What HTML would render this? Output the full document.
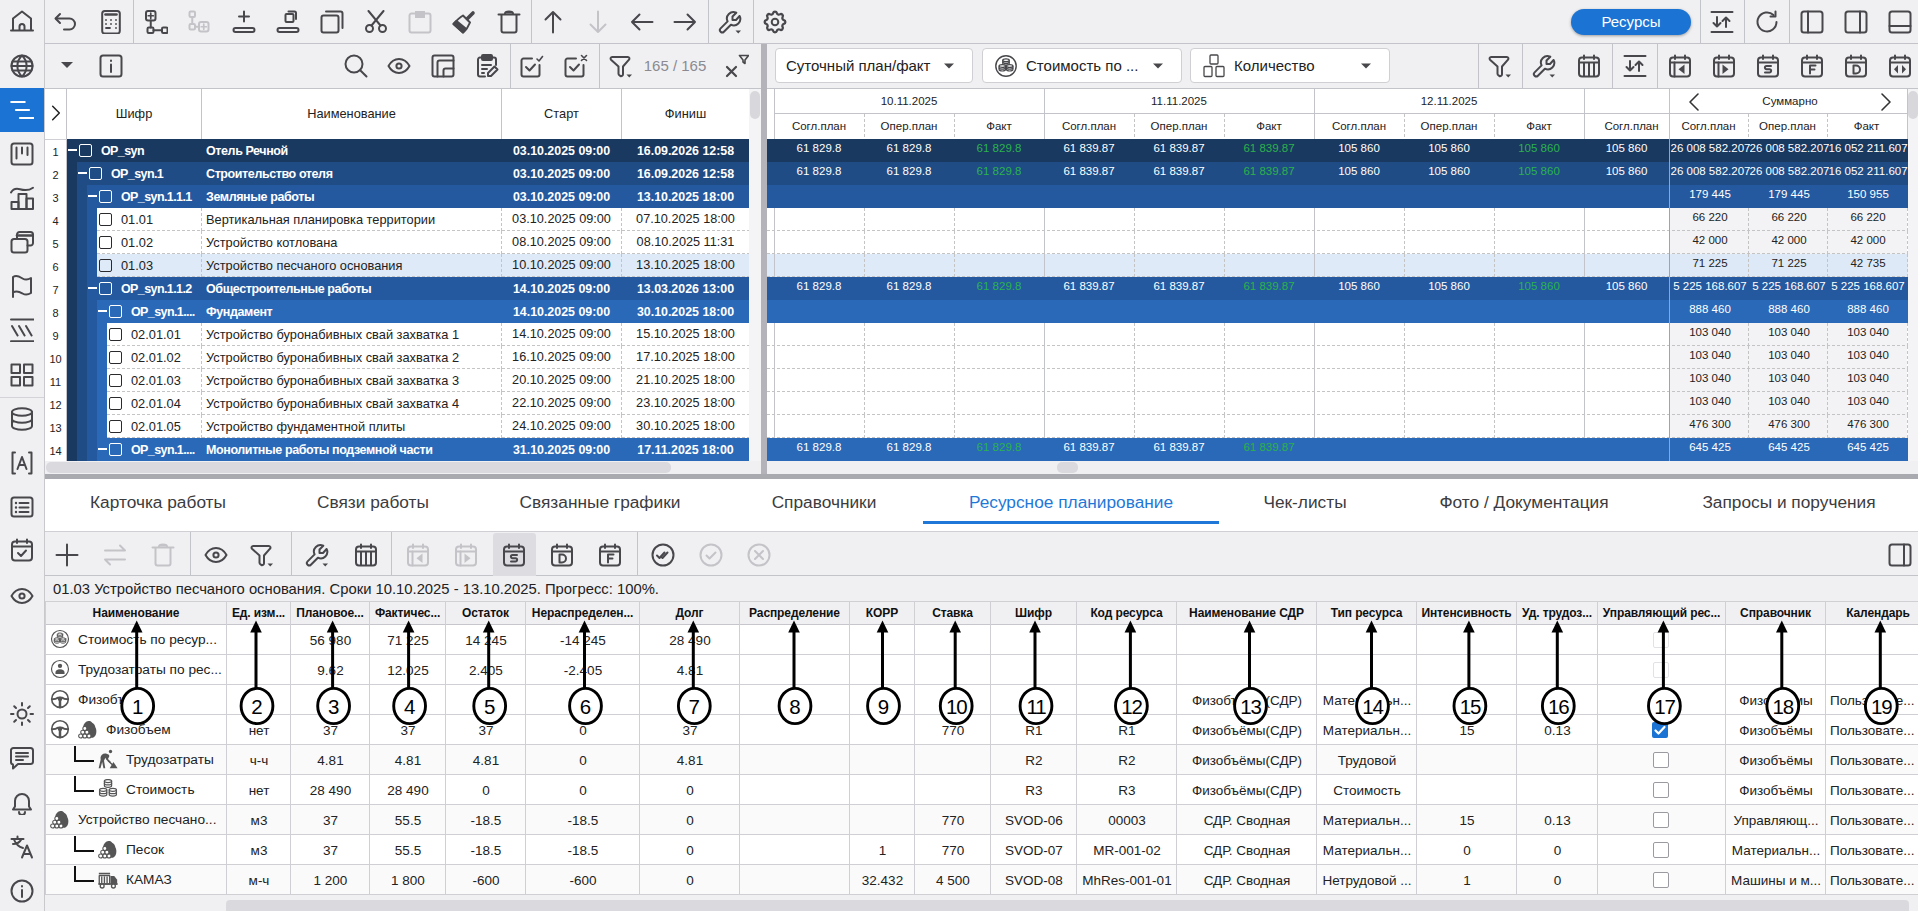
<!DOCTYPE html><html><head><meta charset="utf-8"><style>html,body{margin:0;padding:0;width:1918px;height:911px;overflow:hidden;background:#fff;font-family:"Liberation Sans",sans-serif}</style></head><body><div style="position:relative;width:1918px;height:911px;overflow:hidden"><div style="position:absolute;left:0px;top:0px;width:44px;height:911px;background:#f0f0f3"></div>
<div style="position:absolute;left:44px;top:0px;width:1px;height:911px;background:#c8c8cd"></div>
<div style="position:absolute;left:0px;top:88px;width:44px;height:44px;background:#1b74d3"></div>
<div style="position:absolute;left:0px;top:397px;width:44px;height:1px;background:#d4d4d8"></div>
<div style="color:#48484c"><svg style="position:absolute;left:10.0px;top:10.0px;" width="24" height="24" viewBox="0 0 24 24" fill="none" stroke="currentColor" stroke-width="2" stroke-linecap="round" stroke-linejoin="round"><path d="M1 20.5h22"/><path d="M3 20V8.5L12 1.5l9 7V20"/><path d="M9.5 20v-3.5a2.5 2.5 0 0 1 5 0V20"/></svg></div>
<div style="color:#48484c"><svg style="position:absolute;left:10.0px;top:54.0px;" width="24" height="24" viewBox="0 0 24 24" fill="none" stroke="currentColor" stroke-width="2" stroke-linecap="round" stroke-linejoin="round"><circle cx="12" cy="12" r="10.5"/><path d="M1.5 12h21M2.5 7.5h19M2.5 16.5h19"/><path d="M12 1.5c-3.2 3-4.6 6.5-4.6 10.5s1.4 7.5 4.6 10.5c3.2-3 4.6-6.5 4.6-10.5S15.2 4.5 12 1.5z"/></svg></div>
<div style="color:#48484c"><svg style="position:absolute;left:10.0px;top:142.0px;" width="24" height="24" viewBox="0 0 24 24" fill="none" stroke="currentColor" stroke-width="2" stroke-linecap="round" stroke-linejoin="round"><rect x="1.5" y="1.5" width="21" height="21" rx="2.5"/><path d="M6.5 5.5v11M12 5.5v6M17.5 5.5v7.5"/></svg></div>
<div style="color:#48484c"><svg style="position:absolute;left:10.0px;top:186.0px;" width="24" height="24" viewBox="0 0 24 24" fill="none" stroke="currentColor" stroke-width="2" stroke-linecap="round" stroke-linejoin="round"><path d="M1 6.5C3 3 6 2 10 3.2s8 2 13-1.5"/><rect x="1.5" y="16" width="7" height="7"/><rect x="8.5" y="8" width="8" height="15"/><rect x="16.5" y="12.5" width="6.5" height="10.5"/></svg></div>
<div style="color:#48484c"><svg style="position:absolute;left:10.0px;top:230.0px;" width="24" height="24" viewBox="0 0 24 24" fill="none" stroke="currentColor" stroke-width="2" stroke-linecap="round" stroke-linejoin="round"><rect x="1.5" y="9" width="16" height="13.5" rx="2.5"/><path d="M7 9V4.5A2.5 2.5 0 0 1 9.5 2h11A2.5 2.5 0 0 1 23 4.5V13a2.5 2.5 0 0 1-2.5 2.5h-3"/><path d="M7 5.5h15" stroke-width="2.6"/></svg></div>
<div style="color:#48484c"><svg style="position:absolute;left:10.0px;top:274.0px;" width="24" height="24" viewBox="0 0 24 24" fill="none" stroke="currentColor" stroke-width="2" stroke-linecap="round" stroke-linejoin="round"><path d="M3 23V3c4-2.5 7 0 9.5 1.5s5.5 1.5 8.5-.5v15c-3 2-6 2-8.5.5S7 16 3 18.5"/></svg></div>
<div style="color:#48484c"><svg style="position:absolute;left:10.0px;top:318.0px;" width="24" height="24" viewBox="0 0 24 24" fill="none" stroke="currentColor" stroke-width="2" stroke-linecap="round" stroke-linejoin="round"><path d="M1 1.5h22.5M1 23.2h22.5M2 8l5.6 9.5M9 8l5.6 9.5M16 8l5.6 9.5"/></svg></div>
<div style="color:#48484c"><svg style="position:absolute;left:10.0px;top:363.0px;" width="24" height="24" viewBox="0 0 24 24" fill="none" stroke="currentColor" stroke-width="2" stroke-linecap="round" stroke-linejoin="round"><rect x="1.5" y="1.5" width="8.5" height="8.5"/><rect x="14" y="1.5" width="8.5" height="8.5"/><rect x="1.5" y="14" width="8.5" height="8.5"/><rect x="14" y="14" width="8.5" height="8.5"/></svg></div>
<div style="color:#48484c"><svg style="position:absolute;left:10.0px;top:407.0px;" width="24" height="24" viewBox="0 0 24 24" fill="none" stroke="currentColor" stroke-width="2" stroke-linecap="round" stroke-linejoin="round"><ellipse cx="12" cy="5" rx="10" ry="3.8"/><path d="M2 5v14c0 2.1 4.5 3.8 10 3.8s10-1.7 10-3.8V5M2 12c0 2.1 4.5 3.8 10 3.8s10-1.7 10-3.8"/></svg></div>
<div style="color:#48484c"><svg style="position:absolute;left:10.0px;top:451.0px;" width="24" height="24" viewBox="0 0 24 24" fill="none" stroke="currentColor" stroke-width="2" stroke-linecap="round" stroke-linejoin="round"><path d="M5 1.5H2.5v21H5M19 1.5h2.5v21H19"/><path d="M7.5 18L12 6l4.5 12M9 14h6"/></svg></div>
<div style="color:#48484c"><svg style="position:absolute;left:10.0px;top:495.0px;" width="24" height="24" viewBox="0 0 24 24" fill="none" stroke="currentColor" stroke-width="2" stroke-linecap="round" stroke-linejoin="round"><rect x="1.5" y="2.5" width="21" height="19" rx="2.5"/><path d="M6 8h.01M6 12.5h.01M6 17h.01" stroke-width="2.4"/><path d="M9.5 8h9M9.5 12.5h9M9.5 17h9"/></svg></div>
<div style="color:#48484c"><svg style="position:absolute;left:10.0px;top:538.0px;" width="24" height="24" viewBox="0 0 24 24" fill="none" stroke="currentColor" stroke-width="2" stroke-linecap="round" stroke-linejoin="round"><rect x="2" y="3.5" width="20" height="19" rx="3"/><path d="M2 8.5h20M7 1.5v3.5M17 1.5v3.5"/><path d="M8 15l3 3 5-5.5"/></svg></div>
<div style="color:#48484c"><svg style="position:absolute;left:10.0px;top:584.0px;" width="24" height="24" viewBox="0 0 24 24" fill="none" stroke="currentColor" stroke-width="2" stroke-linecap="round" stroke-linejoin="round"><path d="M1.5 12C4 7.5 8 5 12 5s8 2.5 10.5 7C20 16.5 16 19 12 19s-8-2.5-10.5-7z"/><circle cx="12" cy="12" r="2.6"/></svg></div>
<div style="color:#48484c"><svg style="position:absolute;left:10.0px;top:702.0px;" width="24" height="24" viewBox="0 0 24 24" fill="none" stroke="currentColor" stroke-width="2" stroke-linecap="round" stroke-linejoin="round"><circle cx="12" cy="12" r="4.5"/><path d="M12 1v2.5M12 20.5V23M1 12h2.5M20.5 12H23M4.2 4.2l1.8 1.8M18 18l1.8 1.8M4.2 19.8L6 18M18 6l1.8-1.8"/></svg></div>
<div style="color:#48484c"><svg style="position:absolute;left:10.0px;top:746.0px;" width="24" height="24" viewBox="0 0 24 24" fill="none" stroke="currentColor" stroke-width="2" stroke-linecap="round" stroke-linejoin="round"><path d="M3.5 2h17A2.5 2.5 0 0 1 23 4.5v11a2.5 2.5 0 0 1-2.5 2.5H8l-5 4.5V18.5a2.5 2.5 0 0 1-2-2.5v-11A2.5 2.5 0 0 1 3.5 2z"/><path d="M6 7h12M6 10.5h12M6 14h7"/></svg></div>
<div style="color:#48484c"><svg style="position:absolute;left:10.0px;top:791.0px;" width="24" height="24" viewBox="0 0 24 24" fill="none" stroke="currentColor" stroke-width="2" stroke-linecap="round" stroke-linejoin="round"><path d="M3 18.5h18l-2-3V10a7 7 0 0 0-14 0v5.5z"/><path d="M9 21a3 3 0 0 0 6 0"/></svg></div>
<div style="color:#48484c"><svg style="position:absolute;left:10.0px;top:835.0px;" width="24" height="24" viewBox="0 0 24 24" fill="none" stroke="currentColor" stroke-width="2" stroke-linecap="round" stroke-linejoin="round"><path d="M1.5 4h12M7.5 1.5V4M3 9c4 0 7-2 8.5-5M4 4.5c1.5 4 5 7.5 9 8.5"/><path d="M12 22.5l5-12 5 12M13.5 19h7"/></svg></div>
<div style="color:#48484c"><svg style="position:absolute;left:10.0px;top:879.0px;" width="24" height="24" viewBox="0 0 24 24" fill="none" stroke="currentColor" stroke-width="2" stroke-linecap="round" stroke-linejoin="round"><circle cx="12" cy="12" r="10.5"/><path d="M12 7v.5M12 11v7"/></svg></div>
<svg style="position:absolute;left:10.0px;top:98.0px;" width="24" height="24" viewBox="0 0 24 24" fill="none" stroke="#fff" stroke-width="2.2" stroke-linecap="round" stroke-linejoin="round"><path d="M1.3 4h13.4M6 12h13M10 20h13.8"/></svg>
<div style="position:absolute;left:45px;top:0px;width:1873px;height:43px;background:#f0f0f3"></div>
<div style="position:absolute;left:45px;top:43px;width:1873px;height:1px;background:#c3c3ca"></div>
<div style="color:#48484c"><svg style="position:absolute;left:54.0px;top:10.0px;" width="24" height="24" viewBox="0 0 24 24" fill="none" stroke="currentColor" stroke-width="2" stroke-linecap="round" stroke-linejoin="round"><path d="M6 4L1.5 8.5 6 13"/><path d="M2 8.5h13.5a5.5 5.5 0 0 1 0 11H10"/></svg></div>
<div style="color:#48484c"><svg style="position:absolute;left:99.0px;top:10.0px;" width="24" height="24" viewBox="0 0 24 24" fill="none" stroke="currentColor" stroke-width="2" stroke-linecap="round" stroke-linejoin="round"><rect x="3.2" y="1" width="17.6" height="22.5" rx="2.5"/><path d="M6.5 4.5h11" stroke-width="2.6"/><path d="M7 10h.01M12 10h.01M17 10h.01M7 14h.01M12 14h.01M17 14h.01M7 18h4M17 18h.01" stroke-width="1.8"/></svg></div>
<div style="color:#48484c"><svg style="position:absolute;left:144.0px;top:10.0px;" width="24" height="24" viewBox="0 0 24 24" fill="none" stroke="currentColor" stroke-width="2" stroke-linecap="round" stroke-linejoin="round"><rect x="2" y="1" width="9.5" height="9.5" rx="2"/><path d="M6.75 3.2v5.1M4.2 5.75h5.1" stroke-width="1.7"/><path d="M6.75 10.5v7"/><rect x="3.5" y="17.5" width="6" height="5.5" rx="1.2"/><rect x="18" y="17.5" width="5.5" height="5.5" rx="1.2"/><path d="M9.5 20.2H18"/></svg></div>
<div style="color:#c4c4c8"><svg style="position:absolute;left:188.0px;top:10.0px;" width="24" height="24" viewBox="0 0 24 24" fill="none" stroke="currentColor" stroke-width="2" stroke-linecap="round" stroke-linejoin="round"><rect x="1.5" y="1.5" width="5.5" height="5.5" rx="1.2"/><path d="M4.25 7v7"/><rect x="1.5" y="14" width="5.5" height="5.5" rx="1.2"/><path d="M7 16.7h4"/><rect x="11" y="12" width="9.5" height="9.5" rx="2"/><path d="M15.75 14.2v5.1M13.2 16.75h5.1" stroke-width="1.7"/></svg></div>
<div style="color:#48484c"><svg style="position:absolute;left:232.0px;top:10.0px;" width="24" height="24" viewBox="0 0 24 24" fill="none" stroke="currentColor" stroke-width="2" stroke-linecap="round" stroke-linejoin="round"><path d="M12 1.5v10M7 6.5h10"/><rect x="1.5" y="18" width="21" height="4" rx="2"/></svg></div>
<div style="color:#48484c"><svg style="position:absolute;left:276.0px;top:10.0px;" width="24" height="24" viewBox="0 0 24 24" fill="none" stroke="currentColor" stroke-width="2" stroke-linecap="round" stroke-linejoin="round"><rect x="9.5" y="4" width="8" height="8" rx="1"/><path d="M12.5 1.5h6a1.5 1.5 0 0 1 1.5 1.5v6"/><rect x="1.5" y="18" width="21" height="4" rx="2"/></svg></div>
<div style="color:#48484c"><svg style="position:absolute;left:320.0px;top:10.0px;" width="24" height="24" viewBox="0 0 24 24" fill="none" stroke="currentColor" stroke-width="2" stroke-linecap="round" stroke-linejoin="round"><rect x="1.5" y="5.5" width="17" height="17" rx="2"/><path d="M6 1.5h14.5a2 2 0 0 1 2 2V18"/></svg></div>
<div style="color:#48484c"><svg style="position:absolute;left:364.0px;top:10.0px;" width="24" height="24" viewBox="0 0 24 24" fill="none" stroke="currentColor" stroke-width="2" stroke-linecap="round" stroke-linejoin="round"><circle cx="5.5" cy="18.5" r="3.5"/><circle cx="18.5" cy="18.5" r="3.5"/><path d="M7.5 15.5L19.5 1M16.5 15.5L4.5 1"/></svg></div>
<div style="color:#c4c4c8"><svg style="position:absolute;left:408.0px;top:10.0px;" width="24" height="24" viewBox="0 0 24 24" fill="none" stroke="currentColor" stroke-width="2" stroke-linecap="round" stroke-linejoin="round"><path d="M3.5 3.5h17a2 2 0 0 1 2 2v15a2 2 0 0 1-2 2h-17a2 2 0 0 1-2-2v-15a2 2 0 0 1 2-2z"/><rect x="7" y="1" width="10" height="7" fill="currentColor" stroke="none"/></svg></div>
<div style="color:#48484c"><svg style="position:absolute;left:452.0px;top:10.0px;" width="24" height="24" viewBox="0 0 24 24" fill="none" stroke="currentColor" stroke-width="2" stroke-linecap="round" stroke-linejoin="round"><path d="M15.5 8.5l5.5-5.5" stroke-width="3.6"/><path d="M11 5.5l7 7c-1.5 4-4 7.5-7 10L1.5 14c3-3.5 6-6.5 9.5-8.5z"/><path d="M1.5 14l9.5 8.5c1.2-1 2.3-2.2 3.3-3.5L4.5 11z" fill="currentColor"/></svg></div>
<div style="color:#48484c"><svg style="position:absolute;left:497.0px;top:10.0px;" width="24" height="24" viewBox="0 0 24 24" fill="none" stroke="currentColor" stroke-width="2" stroke-linecap="round" stroke-linejoin="round"><path d="M1.5 4.5h21"/><path d="M8 3.5c0-1.5 1-2 4-2s4 .5 4 2" fill="currentColor"/><path d="M4.5 5v15.5a2 2 0 0 0 2 2h11a2 2 0 0 0 2-2V5"/></svg></div>
<div style="color:#48484c"><svg style="position:absolute;left:541.0px;top:10.0px;" width="24" height="24" viewBox="0 0 24 24" fill="none" stroke="currentColor" stroke-width="2" stroke-linecap="round" stroke-linejoin="round"><path d="M12 22.5V2M4.5 9.5L12 2l7.5 7.5"/></svg></div>
<div style="color:#c4c4c8"><svg style="position:absolute;left:586.0px;top:10.0px;" width="24" height="24" viewBox="0 0 24 24" fill="none" stroke="currentColor" stroke-width="2" stroke-linecap="round" stroke-linejoin="round"><path d="M12 1.5V22M4.5 14.5L12 22l7.5-7.5"/></svg></div>
<div style="color:#48484c"><svg style="position:absolute;left:630.0px;top:10.0px;" width="24" height="24" viewBox="0 0 24 24" fill="none" stroke="currentColor" stroke-width="2" stroke-linecap="round" stroke-linejoin="round"><path d="M22.5 12H2M9.5 4.5L2 12l7.5 7.5"/></svg></div>
<div style="color:#48484c"><svg style="position:absolute;left:673.0px;top:10.0px;" width="24" height="24" viewBox="0 0 24 24" fill="none" stroke="currentColor" stroke-width="2" stroke-linecap="round" stroke-linejoin="round"><path d="M1.5 12H22M14.5 4.5L22 12l-7.5 7.5"/></svg></div>
<div style="color:#48484c"><svg style="position:absolute;left:718.0px;top:10.0px;" width="24" height="24" viewBox="0 0 24 24" fill="none" stroke="currentColor" stroke-width="2" stroke-linecap="round" stroke-linejoin="round"><path d="M18 10h-3.5V6.5l3.8-3.8a6.5 6.5 0 0 0-8.7 8.7l-7 7a2.3 2.3 0 0 0 3.3 3.3l7-7a6.5 6.5 0 0 0 8.7-8.7z"/><path d="M17.5 20.5h5.5l-2.75 3z" fill="currentColor" stroke="none"/></svg></div>
<div style="color:#48484c"><svg style="position:absolute;left:763.0px;top:10.0px;" width="24" height="24" viewBox="0 0 24 24" fill="none" stroke="currentColor" stroke-width="2" stroke-linecap="round" stroke-linejoin="round"><path d="M10.325 4.317c.426-1.756 2.924-1.756 3.35 0a1.724 1.724 0 0 0 2.573 1.066c1.543-.94 3.31.826 2.37 2.37a1.724 1.724 0 0 0 1.065 2.572c1.756.426 1.756 2.924 0 3.35a1.724 1.724 0 0 0-1.066 2.573c.94 1.543-.826 3.31-2.37 2.37a1.724 1.724 0 0 0-2.572 1.065c-.426 1.756-2.924 1.756-3.35 0a1.724 1.724 0 0 0-2.573-1.066c-1.543.94-3.31-.826-2.37-2.37a1.724 1.724 0 0 0-1.065-2.572c-1.756-.426-1.756-2.924 0-3.35a1.724 1.724 0 0 0 1.066-2.573c-.94-1.543.826-3.31 2.37-2.37c1 .608 2.296.07 2.572-1.065z" transform="translate(-1.8 -1.8) scale(1.15)"/><circle cx="12" cy="12" r="3.3"/></svg></div>
<div style="position:absolute;left:133px;top:0px;width:1px;height:43px;background:#c3c3ca"></div>
<div style="position:absolute;left:531px;top:0px;width:1px;height:43px;background:#c3c3ca"></div>
<div style="position:absolute;left:708px;top:0px;width:1px;height:43px;background:#c3c3ca"></div>
<div style="position:absolute;left:753px;top:0px;width:1px;height:43px;background:#c3c3ca"></div>
<div style="position:absolute;left:1571px;top:9px;width:120px;height:26px;background:#1b74d3;border-radius:13px;box-shadow:0 1px 3px rgba(0,0,0,.35)"></div>
<div style="position:absolute;left:1571px;top:9px;width:120px;height:26px;line-height:26px;text-align:center;white-space:nowrap;overflow:hidden;font-family:'Liberation Sans',sans-serif;color:#fff;font-size:15px">Ресурсы</div>
<div style="position:absolute;left:1700px;top:0px;width:1px;height:43px;background:#c3c3ca"></div>
<div style="position:absolute;left:1744px;top:0px;width:1px;height:43px;background:#c3c3ca"></div>
<div style="position:absolute;left:1789px;top:0px;width:1px;height:43px;background:#c3c3ca"></div>
<div style="color:#48484c"><svg style="position:absolute;left:1710.0px;top:10.0px;" width="24" height="24" viewBox="0 0 24 24" fill="none" stroke="currentColor" stroke-width="2" stroke-linecap="round" stroke-linejoin="round"><path d="M1.5 2h21M1.5 22h21"/><path d="M7 7v9.5M3.5 13l3.5 3.5 3.5-3.5" /><path d="M16 17V7.5M12.5 11L16 7.5l3.5 3.5"/></svg></div>
<div style="color:#48484c"><svg style="position:absolute;left:1755.0px;top:10.0px;" width="24" height="24" viewBox="0 0 24 24" fill="none" stroke="currentColor" stroke-width="2" stroke-linecap="round" stroke-linejoin="round"><path d="M21.5 12a9.5 9.5 0 1 1-3-7"/><path d="M20.5 1.5v5h-5"/></svg></div>
<div style="color:#48484c"><svg style="position:absolute;left:1800.0px;top:10.0px;" width="24" height="24" viewBox="0 0 24 24" fill="none" stroke="currentColor" stroke-width="2" stroke-linecap="round" stroke-linejoin="round"><rect x="1.5" y="1.5" width="21" height="21" rx="2.5"/><path d="M8 1.5v21"/></svg></div>
<div style="color:#48484c"><svg style="position:absolute;left:1844.0px;top:10.0px;" width="24" height="24" viewBox="0 0 24 24" fill="none" stroke="currentColor" stroke-width="2" stroke-linecap="round" stroke-linejoin="round"><rect x="1.5" y="1.5" width="21" height="21" rx="2.5"/><path d="M16 1.5v21"/></svg></div>
<div style="color:#48484c"><svg style="position:absolute;left:1888.0px;top:10.0px;" width="24" height="24" viewBox="0 0 24 24" fill="none" stroke="currentColor" stroke-width="2" stroke-linecap="round" stroke-linejoin="round"><rect x="1.5" y="1.5" width="21" height="21" rx="2.5"/><path d="M1.5 16h21"/></svg></div>
<div style="position:absolute;left:45px;top:44px;width:1873px;height:44px;background:#f0f0f3"></div>
<div style="position:absolute;left:45px;top:88px;width:1873px;height:1px;background:#c3c3ca"></div>
<div style="color:#48484c"><svg style="position:absolute;left:55.0px;top:53.0px;" width="24" height="24" viewBox="0 0 24 24" fill="none" stroke="currentColor" stroke-width="2" stroke-linecap="round" stroke-linejoin="round"><path d="M6 9h12l-6 6z" fill="currentColor" stroke="none"/></svg></div>
<div style="color:#48484c"><svg style="position:absolute;left:99.0px;top:54.0px;" width="24" height="24" viewBox="0 0 24 24" fill="none" stroke="currentColor" stroke-width="2" stroke-linecap="round" stroke-linejoin="round"><rect x="1.5" y="1.5" width="21" height="21" rx="2.5"/><path d="M12 6.5v.5M12 10.5v7.5"/></svg></div>
<div style="color:#48484c"><svg style="position:absolute;left:344.0px;top:54.0px;" width="24" height="24" viewBox="0 0 24 24" fill="none" stroke="currentColor" stroke-width="2" stroke-linecap="round" stroke-linejoin="round"><circle cx="10" cy="10" r="8.5"/><path d="M16.2 16.2l6.3 6.3"/></svg></div>
<div style="color:#48484c"><svg style="position:absolute;left:387.0px;top:54.0px;" width="24" height="24" viewBox="0 0 24 24" fill="none" stroke="currentColor" stroke-width="2" stroke-linecap="round" stroke-linejoin="round"><path d="M1.5 12C4 7.5 8 5 12 5s8 2.5 10.5 7C20 16.5 16 19 12 19s-8-2.5-10.5-7z"/><circle cx="12" cy="12" r="2.6"/></svg></div>
<div style="color:#48484c"><svg style="position:absolute;left:431.0px;top:54.0px;" width="24" height="24" viewBox="0 0 24 24" fill="none" stroke="currentColor" stroke-width="2" stroke-linecap="round" stroke-linejoin="round"><rect x="1.5" y="1.5" width="21" height="21" rx="2"/><path d="M6.5 22.5V8.5a2 2 0 0 1 2-2h14"/><path d="M12.5 22.5v-6a2 2 0 0 1 2-2h8"/></svg></div>
<div style="color:#48484c"><svg style="position:absolute;left:475.0px;top:54.0px;" width="24" height="24" viewBox="0 0 24 24" fill="none" stroke="currentColor" stroke-width="2" stroke-linecap="round" stroke-linejoin="round"><path d="M7 3.5H5a2 2 0 0 0-2 2v15a2 2 0 0 0 2 2h5"/><path d="M17 3.5h2a2 2 0 0 1 2 2V11"/><rect x="7" y="1" width="10" height="5" rx="1" fill="currentColor"/><path d="M7 11h9M7 15h5M7 19h2"/><path d="M19.5 12.5l3 3-6.5 6.5H13v-3z"/></svg></div>
<div style="color:#48484c"><svg style="position:absolute;left:520.0px;top:54.0px;" width="24" height="24" viewBox="0 0 24 24" fill="none" stroke="currentColor" stroke-width="2" stroke-linecap="round" stroke-linejoin="round"><path d="M19.5 11v9.5a2 2 0 0 1-2 2H3.5a2 2 0 0 1-2-2v-14a2 2 0 0 1 2-2H12"/><path d="M6 13l3.5 3.5L15 10.5"/><path d="M17 5l2 2 3.5-4.5" stroke-width="1.6"/></svg></div>
<div style="color:#48484c"><svg style="position:absolute;left:564.0px;top:54.0px;" width="24" height="24" viewBox="0 0 24 24" fill="none" stroke="currentColor" stroke-width="2" stroke-linecap="round" stroke-linejoin="round"><path d="M19.5 11v9.5a2 2 0 0 1-2 2H3.5a2 2 0 0 1-2-2v-14a2 2 0 0 1 2-2H12"/><path d="M6 13l3.5 3.5L15 10.5"/><path d="M17.5 1.5l5 5M22.5 1.5l-5 5" stroke-width="1.6"/></svg></div>
<div style="color:#48484c"><svg style="position:absolute;left:609.0px;top:54.0px;" width="24" height="24" viewBox="0 0 24 24" fill="none" stroke="currentColor" stroke-width="2" stroke-linecap="round" stroke-linejoin="round"><path d="M3.2 3h15.6a1.6 1.6 0 0 1 1.2 2.7L14 12.5v7.8a1.8 1.8 0 0 1-2.8 1.5l-.6-.4A2 2 0 0 1 9.5 19.7v-7.2L2 5.7A1.6 1.6 0 0 1 3.2 3z"/><path d="M17.5 20.5h5.5l-2.75 3z" fill="currentColor" stroke="none"/></svg></div>
<div style="position:absolute;left:510px;top:44px;width:1px;height:44px;background:#c3c3ca"></div>
<div style="position:absolute;left:599px;top:44px;width:1px;height:44px;background:#c3c3ca"></div>
<div style="position:absolute;left:640px;top:52px;width:70px;height:28px;line-height:28px;text-align:center;white-space:nowrap;overflow:hidden;font-family:'Liberation Sans',sans-serif;color:#8a8a90;font-size:15px">165 / 165</div>
<div style="color:#48484c"><svg style="position:absolute;left:725.0px;top:54.0px;" width="24" height="24" viewBox="0 0 24 24" fill="none" stroke="currentColor" stroke-width="2" stroke-linecap="round" stroke-linejoin="round"><path d="M2 13l9 9M11 13l-9 9" stroke-width="2.2"/><path d="M14.5 1.5h9l-3.5 4.5v3.5l-2-1.5v-2z" stroke-width="1.6"/></svg></div>
<div style="position:absolute;left:775px;top:48px;width:198px;height:35px;background:#fff;border:1px solid #cfcfd4;border-radius:4px;box-sizing:border-box"></div>
<div style="position:absolute;left:786px;top:48px;width:157px;height:35px;line-height:35px;text-align:left;white-space:nowrap;overflow:hidden;font-family:'Liberation Sans',sans-serif;color:#222;font-size:15px">Суточный план/факт</div>
<div style="color:#48484c"><svg style="position:absolute;left:939.0px;top:56.0px;" width="20" height="20" viewBox="0 0 24 24" fill="none" stroke="currentColor" stroke-width="2" stroke-linecap="round" stroke-linejoin="round"><path d="M6 9h12l-6 6z" fill="currentColor" stroke="none"/></svg></div>
<div style="position:absolute;left:982px;top:48px;width:200px;height:35px;background:#fff;border:1px solid #cfcfd4;border-radius:4px;box-sizing:border-box"></div>
<div style="position:absolute;left:1026px;top:48px;width:126px;height:35px;line-height:35px;text-align:left;white-space:nowrap;overflow:hidden;font-family:'Liberation Sans',sans-serif;color:#222;font-size:15px">Стоимость по ...</div>
<div style="color:#48484c"><svg style="position:absolute;left:1148.0px;top:56.0px;" width="20" height="20" viewBox="0 0 24 24" fill="none" stroke="currentColor" stroke-width="2" stroke-linecap="round" stroke-linejoin="round"><path d="M6 9h12l-6 6z" fill="currentColor" stroke="none"/></svg></div>
<div style="color:#48484c"><svg style="position:absolute;left:994.0px;top:54.0px;" width="24" height="24" viewBox="0 0 24 24" fill="none" stroke="currentColor" stroke-width="1.6" stroke-linecap="round" stroke-linejoin="round"><circle cx="12" cy="12" r="10.2" stroke-width="1.4"/><g stroke-width="1.2"><path d="M8.8 6.2v3.6c0 .8 1.4 1.4 3.2 1.4s3.2-.6 3.2-1.4V6.2" fill="#fff"/><ellipse cx="12" cy="6.2" rx="3.2" ry="1.4" fill="#fff"/><path d="M8.8 8.0c0 .8 1.4 1.4 3.2 1.4s3.2-.6 3.2-1.4"/><path d="M5.1000000000000005 12v3.6c0 .8 1.4 1.4 3.2 1.4s3.2-.6 3.2-1.4V12" fill="#fff"/><ellipse cx="8.3" cy="12" rx="3.2" ry="1.4" fill="#fff"/><path d="M5.1000000000000005 13.8c0 .8 1.4 1.4 3.2 1.4s3.2-.6 3.2-1.4"/><path d="M12.5 12v3.6c0 .8 1.4 1.4 3.2 1.4s3.2-.6 3.2-1.4V12" fill="#fff"/><ellipse cx="15.7" cy="12" rx="3.2" ry="1.4" fill="#fff"/><path d="M12.5 13.8c0 .8 1.4 1.4 3.2 1.4s3.2-.6 3.2-1.4"/></g></svg></div>
<div style="position:absolute;left:1190px;top:48px;width:200px;height:35px;background:#fff;border:1px solid #cfcfd4;border-radius:4px;box-sizing:border-box"></div>
<div style="position:absolute;left:1234px;top:48px;width:126px;height:35px;line-height:35px;text-align:left;white-space:nowrap;overflow:hidden;font-family:'Liberation Sans',sans-serif;color:#222;font-size:15px">Количество</div>
<div style="color:#48484c"><svg style="position:absolute;left:1356.0px;top:56.0px;" width="20" height="20" viewBox="0 0 24 24" fill="none" stroke="currentColor" stroke-width="2" stroke-linecap="round" stroke-linejoin="round"><path d="M6 9h12l-6 6z" fill="currentColor" stroke="none"/></svg></div>
<div style="color:#48484c"><svg style="position:absolute;left:1202.0px;top:54.0px;" width="24" height="24" viewBox="0 0 24 24" fill="none" stroke="currentColor" stroke-width="2" stroke-linecap="round" stroke-linejoin="round"><g stroke-width="1.3"><rect x="8" y="1" width="8" height="9" rx="1"/><rect x="2" y="12.5" width="8" height="10" rx="1"/><rect x="14" y="12.5" width="8" height="10" rx="1"/></g></svg></div>
<div style="position:absolute;left:1478px;top:44px;width:1px;height:44px;background:#c3c3ca"></div>
<div style="position:absolute;left:1522px;top:44px;width:1px;height:44px;background:#c3c3ca"></div>
<div style="position:absolute;left:1612px;top:44px;width:1px;height:44px;background:#c3c3ca"></div>
<div style="position:absolute;left:1657px;top:44px;width:1px;height:44px;background:#c3c3ca"></div>
<div style="color:#48484c"><svg style="position:absolute;left:1488.0px;top:54.0px;" width="24" height="24" viewBox="0 0 24 24" fill="none" stroke="currentColor" stroke-width="2" stroke-linecap="round" stroke-linejoin="round"><path d="M3.2 3h15.6a1.6 1.6 0 0 1 1.2 2.7L14 12.5v7.8a1.8 1.8 0 0 1-2.8 1.5l-.6-.4A2 2 0 0 1 9.5 19.7v-7.2L2 5.7A1.6 1.6 0 0 1 3.2 3z"/><path d="M17.5 20.5h5.5l-2.75 3z" fill="currentColor" stroke="none"/></svg></div>
<div style="color:#48484c"><svg style="position:absolute;left:1532.0px;top:54.0px;" width="24" height="24" viewBox="0 0 24 24" fill="none" stroke="currentColor" stroke-width="2" stroke-linecap="round" stroke-linejoin="round"><path d="M18 10h-3.5V6.5l3.8-3.8a6.5 6.5 0 0 0-8.7 8.7l-7 7a2.3 2.3 0 0 0 3.3 3.3l7-7a6.5 6.5 0 0 0 8.7-8.7z"/><path d="M17.5 20.5h5.5l-2.75 3z" fill="currentColor" stroke="none"/></svg></div>
<div style="color:#48484c"><svg style="position:absolute;left:1577.0px;top:54.0px;" width="24" height="24" viewBox="0 0 24 24" fill="none" stroke="currentColor" stroke-width="2" stroke-linecap="round" stroke-linejoin="round"><rect x="2" y="3.5" width="20" height="19" rx="3"/><path d="M2 8.5h20M7 1.5v3.5M17 1.5v3.5"/><path d="M7 9v13M12 9v13M17 9v13"/></svg></div>
<div style="color:#48484c"><svg style="position:absolute;left:1623.0px;top:54.0px;" width="24" height="24" viewBox="0 0 24 24" fill="none" stroke="currentColor" stroke-width="2" stroke-linecap="round" stroke-linejoin="round"><path d="M1.5 2h21M1.5 22h21"/><path d="M7 7v9.5M3.5 13l3.5 3.5 3.5-3.5" /><path d="M16 17V7.5M12.5 11L16 7.5l3.5 3.5"/></svg></div>
<div style="color:#48484c"><svg style="position:absolute;left:1668.0px;top:54.0px;" width="24" height="24" viewBox="0 0 24 24" fill="none" stroke="currentColor" stroke-width="2" stroke-linecap="round" stroke-linejoin="round"><rect x="2" y="3.5" width="20" height="19" rx="3"/><path d="M2 8.5h20M7 1.5v3.5M17 1.5v3.5"/><path d="M6.5 8.5v14"/><path d="M16.5 10.5v9.5L10.5 15.25z" fill="currentColor" stroke="none"/></svg></div>
<div style="color:#48484c"><svg style="position:absolute;left:1712.0px;top:54.0px;" width="24" height="24" viewBox="0 0 24 24" fill="none" stroke="currentColor" stroke-width="2" stroke-linecap="round" stroke-linejoin="round"><rect x="2" y="3.5" width="20" height="19" rx="3"/><path d="M2 8.5h20M7 1.5v3.5M17 1.5v3.5"/><path d="M6.5 8.5v14"/><path d="M10.5 10.5v9.5l6-4.75z" fill="currentColor" stroke="none"/></svg></div>
<div style="color:#48484c"><svg style="position:absolute;left:1756.0px;top:54.0px;" width="24" height="24" viewBox="0 0 24 24" fill="none" stroke="currentColor" stroke-width="2" stroke-linecap="round" stroke-linejoin="round"><rect x="2" y="3.5" width="20" height="19" rx="3"/><path d="M2 8.5h20M7 1.5v3.5M17 1.5v3.5"/><path d="M15 12h-4.5a1.5 1.5 0 0 0 0 3.2h3a1.6 1.6 0 0 1 0 3.3H9" stroke-width="2"/></svg></div>
<div style="color:#48484c"><svg style="position:absolute;left:1800.0px;top:54.0px;" width="24" height="24" viewBox="0 0 24 24" fill="none" stroke="currentColor" stroke-width="2" stroke-linecap="round" stroke-linejoin="round"><rect x="2" y="3.5" width="20" height="19" rx="3"/><path d="M2 8.5h20M7 1.5v3.5M17 1.5v3.5"/><path d="M10 19.5v-8h5.5M10 15.5h4.5" stroke-width="2"/></svg></div>
<div style="color:#48484c"><svg style="position:absolute;left:1844.0px;top:54.0px;" width="24" height="24" viewBox="0 0 24 24" fill="none" stroke="currentColor" stroke-width="2" stroke-linecap="round" stroke-linejoin="round"><rect x="2" y="3.5" width="20" height="19" rx="3"/><path d="M2 8.5h20M7 1.5v3.5M17 1.5v3.5"/><path d="M9.5 11.5v8h2.5a4 4 0 0 0 0-8z" stroke-width="2"/></svg></div>
<div style="color:#48484c"><svg style="position:absolute;left:1888.0px;top:54.0px;" width="24" height="24" viewBox="0 0 24 24" fill="none" stroke="currentColor" stroke-width="2" stroke-linecap="round" stroke-linejoin="round"><rect x="2" y="3.5" width="20" height="19" rx="3"/><path d="M2 8.5h20M7 1.5v3.5M17 1.5v3.5"/><path d="M10 11v8.5l-4-4.25zM14 11v8.5l4-4.25z" fill="currentColor" stroke="none"/></svg></div>
<div style="position:absolute;left:45px;top:89px;width:716px;height:385px;background:#fff"></div>
<div style="position:absolute;left:66px;top:89px;width:1px;height:372px;background:#c3c3ca"></div>
<div style="position:absolute;left:67px;top:89px;width:134px;height:50px;line-height:50px;text-align:center;white-space:nowrap;overflow:hidden;font-family:'Liberation Sans',sans-serif;color:#222;font-size:12.8px">Шифр</div>
<div style="position:absolute;left:202px;top:89px;width:299px;height:50px;line-height:50px;text-align:center;white-space:nowrap;overflow:hidden;font-family:'Liberation Sans',sans-serif;color:#222;font-size:12.8px">Наименование</div>
<div style="position:absolute;left:502px;top:89px;width:119px;height:50px;line-height:50px;text-align:center;white-space:nowrap;overflow:hidden;font-family:'Liberation Sans',sans-serif;color:#222;font-size:12.8px">Старт</div>
<div style="position:absolute;left:622px;top:89px;width:127px;height:50px;line-height:50px;text-align:center;white-space:nowrap;overflow:hidden;font-family:'Liberation Sans',sans-serif;color:#222;font-size:12.8px">Финиш</div>
<div style="position:absolute;left:201px;top:89px;width:1px;height:50px;background:#c3c3ca"></div>
<div style="position:absolute;left:501px;top:89px;width:1px;height:50px;background:#c3c3ca"></div>
<div style="position:absolute;left:621px;top:89px;width:1px;height:50px;background:#c3c3ca"></div>
<div style="position:absolute;left:45px;top:139px;width:704px;height:1px;background:#d0d0d4"></div>
<svg style="position:absolute;left:46.0px;top:103.0px;" width="20" height="20" viewBox="0 0 24 24" fill="none" stroke="#222" stroke-width="1.8" stroke-linecap="round" stroke-linejoin="round"><path d="M8 4l8 8-8 8"/></svg>
<div style="position:absolute;left:45px;top:140.5px;width:21px;height:23px;line-height:23px;text-align:center;white-space:nowrap;overflow:hidden;font-family:'Liberation Sans',sans-serif;color:#222;font-size:11px">1</div>
<div style="position:absolute;left:67px;top:139px;width:682px;height:23px;background:#1a3961"></div>
<div style="position:absolute;left:68px;top:149px;width:9px;height:2px;background:#fff"></div>
<div style="position:absolute;left:79px;top:144px;width:13px;height:13px;border:1.5px solid #fff;border-radius:2px;box-sizing:border-box"></div>
<div style="position:absolute;left:101px;top:140px;width:100px;height:23px;line-height:23px;text-align:left;white-space:nowrap;overflow:hidden;font-family:'Liberation Sans',sans-serif;color:#fff;font-weight:bold;font-size:12.5px;letter-spacing:-0.6px">OP_syn</div>
<div style="position:absolute;left:206px;top:140px;width:290px;height:23px;line-height:23px;text-align:left;white-space:nowrap;overflow:hidden;font-family:'Liberation Sans',sans-serif;color:#fff;font-weight:bold;font-size:12.5px;letter-spacing:-0.4px">Отель Речной</div>
<div style="position:absolute;left:502px;top:140px;width:119px;height:23px;line-height:23px;text-align:center;white-space:nowrap;overflow:hidden;font-family:'Liberation Sans',sans-serif;color:#fff;font-weight:bold;font-size:12.4px">03.10.2025 09:00</div>
<div style="position:absolute;left:622px;top:140px;width:127px;height:23px;line-height:23px;text-align:center;white-space:nowrap;overflow:hidden;font-family:'Liberation Sans',sans-serif;color:#fff;font-weight:bold;font-size:12.4px">16.09.2026 12:58</div>
<div style="position:absolute;left:45px;top:163.5px;width:21px;height:23px;line-height:23px;text-align:center;white-space:nowrap;overflow:hidden;font-family:'Liberation Sans',sans-serif;color:#222;font-size:11px">2</div>
<div style="position:absolute;left:67px;top:162px;width:10px;height:23px;background:#1a3961"></div>
<div style="position:absolute;left:77px;top:162px;width:672px;height:23px;background:#1f4c85"></div>
<div style="position:absolute;left:78px;top:172px;width:9px;height:2px;background:#fff"></div>
<div style="position:absolute;left:89px;top:167px;width:13px;height:13px;border:1.5px solid #fff;border-radius:2px;box-sizing:border-box"></div>
<div style="position:absolute;left:111px;top:163px;width:90px;height:23px;line-height:23px;text-align:left;white-space:nowrap;overflow:hidden;font-family:'Liberation Sans',sans-serif;color:#fff;font-weight:bold;font-size:12.5px;letter-spacing:-0.6px">OP_syn.1</div>
<div style="position:absolute;left:206px;top:163px;width:290px;height:23px;line-height:23px;text-align:left;white-space:nowrap;overflow:hidden;font-family:'Liberation Sans',sans-serif;color:#fff;font-weight:bold;font-size:12.5px;letter-spacing:-0.4px">Строительство отеля</div>
<div style="position:absolute;left:502px;top:163px;width:119px;height:23px;line-height:23px;text-align:center;white-space:nowrap;overflow:hidden;font-family:'Liberation Sans',sans-serif;color:#fff;font-weight:bold;font-size:12.4px">03.10.2025 09:00</div>
<div style="position:absolute;left:622px;top:163px;width:127px;height:23px;line-height:23px;text-align:center;white-space:nowrap;overflow:hidden;font-family:'Liberation Sans',sans-serif;color:#fff;font-weight:bold;font-size:12.4px">16.09.2026 12:58</div>
<div style="position:absolute;left:45px;top:186.5px;width:21px;height:23px;line-height:23px;text-align:center;white-space:nowrap;overflow:hidden;font-family:'Liberation Sans',sans-serif;color:#222;font-size:11px">3</div>
<div style="position:absolute;left:67px;top:185px;width:10px;height:23px;background:#1a3961"></div>
<div style="position:absolute;left:77px;top:185px;width:10px;height:23px;background:#1f4c85"></div>
<div style="position:absolute;left:87px;top:185px;width:662px;height:23px;background:#2459a0"></div>
<div style="position:absolute;left:88px;top:195px;width:9px;height:2px;background:#fff"></div>
<div style="position:absolute;left:99px;top:190px;width:13px;height:13px;border:1.5px solid #fff;border-radius:2px;box-sizing:border-box"></div>
<div style="position:absolute;left:121px;top:186px;width:80px;height:23px;line-height:23px;text-align:left;white-space:nowrap;overflow:hidden;font-family:'Liberation Sans',sans-serif;color:#fff;font-weight:bold;font-size:12.5px;letter-spacing:-0.6px">OP_syn.1.1.1</div>
<div style="position:absolute;left:206px;top:186px;width:290px;height:23px;line-height:23px;text-align:left;white-space:nowrap;overflow:hidden;font-family:'Liberation Sans',sans-serif;color:#fff;font-weight:bold;font-size:12.5px;letter-spacing:-0.4px">Земляные работы</div>
<div style="position:absolute;left:502px;top:186px;width:119px;height:23px;line-height:23px;text-align:center;white-space:nowrap;overflow:hidden;font-family:'Liberation Sans',sans-serif;color:#fff;font-weight:bold;font-size:12.4px">03.10.2025 09:00</div>
<div style="position:absolute;left:622px;top:186px;width:127px;height:23px;line-height:23px;text-align:center;white-space:nowrap;overflow:hidden;font-family:'Liberation Sans',sans-serif;color:#fff;font-weight:bold;font-size:12.4px">13.10.2025 18:00</div>
<div style="position:absolute;left:45px;top:209.5px;width:21px;height:23px;line-height:23px;text-align:center;white-space:nowrap;overflow:hidden;font-family:'Liberation Sans',sans-serif;color:#222;font-size:11px">4</div>
<div style="position:absolute;left:67px;top:208px;width:10px;height:23px;background:#1a3961"></div>
<div style="position:absolute;left:77px;top:208px;width:10px;height:23px;background:#1f4c85"></div>
<div style="position:absolute;left:87px;top:208px;width:10px;height:23px;background:#2459a0"></div>
<div style="position:absolute;left:97px;top:208px;width:652px;height:23px;background:#fff"></div>
<div style="position:absolute;left:99px;top:213px;width:13px;height:13px;border:1.5px solid #2a2a2e;border-radius:2px;box-sizing:border-box"></div>
<div style="position:absolute;left:121px;top:208px;width:80px;height:23px;line-height:23px;text-align:left;white-space:nowrap;overflow:hidden;font-family:'Liberation Sans',sans-serif;color:#222;font-size:12.8px">01.01</div>
<div style="position:absolute;left:206px;top:208px;width:290px;height:23px;line-height:23px;text-align:left;white-space:nowrap;overflow:hidden;font-family:'Liberation Sans',sans-serif;color:#222;font-size:12.8px">Вертикальная планировка территории</div>
<div style="position:absolute;left:502px;top:208px;width:119px;height:23px;line-height:23px;text-align:center;white-space:nowrap;overflow:hidden;font-family:'Liberation Sans',sans-serif;color:#222;font-size:12.7px">03.10.2025 09:00</div>
<div style="position:absolute;left:622px;top:208px;width:127px;height:23px;line-height:23px;text-align:center;white-space:nowrap;overflow:hidden;font-family:'Liberation Sans',sans-serif;color:#222;font-size:12.7px">07.10.2025 18:00</div>
<div style="position:absolute;left:201px;top:208px;width:1px;height:23px;background-image:linear-gradient(to bottom,#c4c4c4 0 3px,transparent 3px 5px);background-size:1px 5px"></div>
<div style="position:absolute;left:501px;top:208px;width:1px;height:23px;background-image:linear-gradient(to bottom,#c4c4c4 0 3px,transparent 3px 5px);background-size:1px 5px"></div>
<div style="position:absolute;left:621px;top:208px;width:1px;height:23px;background-image:linear-gradient(to bottom,#c4c4c4 0 3px,transparent 3px 5px);background-size:1px 5px"></div>
<div style="position:absolute;left:97px;top:230px;width:652px;height:1px;background-image:linear-gradient(to right,#c4c4c4 0 3px,transparent 3px 5px);background-size:5px 1px"></div>
<div style="position:absolute;left:45px;top:232.5px;width:21px;height:23px;line-height:23px;text-align:center;white-space:nowrap;overflow:hidden;font-family:'Liberation Sans',sans-serif;color:#222;font-size:11px">5</div>
<div style="position:absolute;left:67px;top:231px;width:10px;height:23px;background:#1a3961"></div>
<div style="position:absolute;left:77px;top:231px;width:10px;height:23px;background:#1f4c85"></div>
<div style="position:absolute;left:87px;top:231px;width:10px;height:23px;background:#2459a0"></div>
<div style="position:absolute;left:97px;top:231px;width:652px;height:23px;background:#fff"></div>
<div style="position:absolute;left:99px;top:236px;width:13px;height:13px;border:1.5px solid #2a2a2e;border-radius:2px;box-sizing:border-box"></div>
<div style="position:absolute;left:121px;top:231px;width:80px;height:23px;line-height:23px;text-align:left;white-space:nowrap;overflow:hidden;font-family:'Liberation Sans',sans-serif;color:#222;font-size:12.8px">01.02</div>
<div style="position:absolute;left:206px;top:231px;width:290px;height:23px;line-height:23px;text-align:left;white-space:nowrap;overflow:hidden;font-family:'Liberation Sans',sans-serif;color:#222;font-size:12.8px">Устройство котлована</div>
<div style="position:absolute;left:502px;top:231px;width:119px;height:23px;line-height:23px;text-align:center;white-space:nowrap;overflow:hidden;font-family:'Liberation Sans',sans-serif;color:#222;font-size:12.7px">08.10.2025 09:00</div>
<div style="position:absolute;left:622px;top:231px;width:127px;height:23px;line-height:23px;text-align:center;white-space:nowrap;overflow:hidden;font-family:'Liberation Sans',sans-serif;color:#222;font-size:12.7px">08.10.2025 11:31</div>
<div style="position:absolute;left:201px;top:231px;width:1px;height:23px;background-image:linear-gradient(to bottom,#c4c4c4 0 3px,transparent 3px 5px);background-size:1px 5px"></div>
<div style="position:absolute;left:501px;top:231px;width:1px;height:23px;background-image:linear-gradient(to bottom,#c4c4c4 0 3px,transparent 3px 5px);background-size:1px 5px"></div>
<div style="position:absolute;left:621px;top:231px;width:1px;height:23px;background-image:linear-gradient(to bottom,#c4c4c4 0 3px,transparent 3px 5px);background-size:1px 5px"></div>
<div style="position:absolute;left:97px;top:253px;width:652px;height:1px;background-image:linear-gradient(to right,#c4c4c4 0 3px,transparent 3px 5px);background-size:5px 1px"></div>
<div style="position:absolute;left:45px;top:255.5px;width:21px;height:23px;line-height:23px;text-align:center;white-space:nowrap;overflow:hidden;font-family:'Liberation Sans',sans-serif;color:#222;font-size:11px">6</div>
<div style="position:absolute;left:67px;top:254px;width:10px;height:23px;background:#1a3961"></div>
<div style="position:absolute;left:77px;top:254px;width:10px;height:23px;background:#1f4c85"></div>
<div style="position:absolute;left:87px;top:254px;width:10px;height:23px;background:#2459a0"></div>
<div style="position:absolute;left:97px;top:254px;width:652px;height:23px;background:#deeaf7"></div>
<div style="position:absolute;left:99px;top:259px;width:13px;height:13px;border:1.5px solid #2a2a2e;border-radius:2px;box-sizing:border-box"></div>
<div style="position:absolute;left:121px;top:254px;width:80px;height:23px;line-height:23px;text-align:left;white-space:nowrap;overflow:hidden;font-family:'Liberation Sans',sans-serif;color:#222;font-size:12.8px">01.03</div>
<div style="position:absolute;left:206px;top:254px;width:290px;height:23px;line-height:23px;text-align:left;white-space:nowrap;overflow:hidden;font-family:'Liberation Sans',sans-serif;color:#222;font-size:12.8px">Устройство песчаного основания</div>
<div style="position:absolute;left:502px;top:254px;width:119px;height:23px;line-height:23px;text-align:center;white-space:nowrap;overflow:hidden;font-family:'Liberation Sans',sans-serif;color:#222;font-size:12.7px">10.10.2025 09:00</div>
<div style="position:absolute;left:622px;top:254px;width:127px;height:23px;line-height:23px;text-align:center;white-space:nowrap;overflow:hidden;font-family:'Liberation Sans',sans-serif;color:#222;font-size:12.7px">13.10.2025 18:00</div>
<div style="position:absolute;left:201px;top:254px;width:1px;height:23px;background-image:linear-gradient(to bottom,#c4c4c4 0 3px,transparent 3px 5px);background-size:1px 5px"></div>
<div style="position:absolute;left:501px;top:254px;width:1px;height:23px;background-image:linear-gradient(to bottom,#c4c4c4 0 3px,transparent 3px 5px);background-size:1px 5px"></div>
<div style="position:absolute;left:621px;top:254px;width:1px;height:23px;background-image:linear-gradient(to bottom,#c4c4c4 0 3px,transparent 3px 5px);background-size:1px 5px"></div>
<div style="position:absolute;left:97px;top:276px;width:652px;height:1px;background-image:linear-gradient(to right,#c4c4c4 0 3px,transparent 3px 5px);background-size:5px 1px"></div>
<div style="position:absolute;left:45px;top:278.5px;width:21px;height:23px;line-height:23px;text-align:center;white-space:nowrap;overflow:hidden;font-family:'Liberation Sans',sans-serif;color:#222;font-size:11px">7</div>
<div style="position:absolute;left:67px;top:277px;width:10px;height:23px;background:#1a3961"></div>
<div style="position:absolute;left:77px;top:277px;width:10px;height:23px;background:#1f4c85"></div>
<div style="position:absolute;left:87px;top:277px;width:662px;height:23px;background:#2459a0"></div>
<div style="position:absolute;left:88px;top:287px;width:9px;height:2px;background:#fff"></div>
<div style="position:absolute;left:99px;top:282px;width:13px;height:13px;border:1.5px solid #fff;border-radius:2px;box-sizing:border-box"></div>
<div style="position:absolute;left:121px;top:278px;width:80px;height:23px;line-height:23px;text-align:left;white-space:nowrap;overflow:hidden;font-family:'Liberation Sans',sans-serif;color:#fff;font-weight:bold;font-size:12.5px;letter-spacing:-0.6px">OP_syn.1.1.2</div>
<div style="position:absolute;left:206px;top:278px;width:290px;height:23px;line-height:23px;text-align:left;white-space:nowrap;overflow:hidden;font-family:'Liberation Sans',sans-serif;color:#fff;font-weight:bold;font-size:12.5px;letter-spacing:-0.4px">Общестроительные работы</div>
<div style="position:absolute;left:502px;top:278px;width:119px;height:23px;line-height:23px;text-align:center;white-space:nowrap;overflow:hidden;font-family:'Liberation Sans',sans-serif;color:#fff;font-weight:bold;font-size:12.4px">14.10.2025 09:00</div>
<div style="position:absolute;left:622px;top:278px;width:127px;height:23px;line-height:23px;text-align:center;white-space:nowrap;overflow:hidden;font-family:'Liberation Sans',sans-serif;color:#fff;font-weight:bold;font-size:12.4px">13.03.2026 13:00</div>
<div style="position:absolute;left:45px;top:301.5px;width:21px;height:23px;line-height:23px;text-align:center;white-space:nowrap;overflow:hidden;font-family:'Liberation Sans',sans-serif;color:#222;font-size:11px">8</div>
<div style="position:absolute;left:67px;top:300px;width:10px;height:23px;background:#1a3961"></div>
<div style="position:absolute;left:77px;top:300px;width:10px;height:23px;background:#1f4c85"></div>
<div style="position:absolute;left:87px;top:300px;width:10px;height:23px;background:#2459a0"></div>
<div style="position:absolute;left:97px;top:300px;width:652px;height:23px;background:#2a69b8"></div>
<div style="position:absolute;left:98px;top:310px;width:9px;height:2px;background:#fff"></div>
<div style="position:absolute;left:109px;top:305px;width:13px;height:13px;border:1.5px solid #fff;border-radius:2px;box-sizing:border-box"></div>
<div style="position:absolute;left:131px;top:301px;width:70px;height:23px;line-height:23px;text-align:left;white-space:nowrap;overflow:hidden;font-family:'Liberation Sans',sans-serif;color:#fff;font-weight:bold;font-size:12.5px;letter-spacing:-0.6px">OP_syn.1....</div>
<div style="position:absolute;left:206px;top:301px;width:290px;height:23px;line-height:23px;text-align:left;white-space:nowrap;overflow:hidden;font-family:'Liberation Sans',sans-serif;color:#fff;font-weight:bold;font-size:12.5px;letter-spacing:-0.4px">Фундамент</div>
<div style="position:absolute;left:502px;top:301px;width:119px;height:23px;line-height:23px;text-align:center;white-space:nowrap;overflow:hidden;font-family:'Liberation Sans',sans-serif;color:#fff;font-weight:bold;font-size:12.4px">14.10.2025 09:00</div>
<div style="position:absolute;left:622px;top:301px;width:127px;height:23px;line-height:23px;text-align:center;white-space:nowrap;overflow:hidden;font-family:'Liberation Sans',sans-serif;color:#fff;font-weight:bold;font-size:12.4px">30.10.2025 18:00</div>
<div style="position:absolute;left:45px;top:324.5px;width:21px;height:23px;line-height:23px;text-align:center;white-space:nowrap;overflow:hidden;font-family:'Liberation Sans',sans-serif;color:#222;font-size:11px">9</div>
<div style="position:absolute;left:67px;top:323px;width:10px;height:23px;background:#1a3961"></div>
<div style="position:absolute;left:77px;top:323px;width:10px;height:23px;background:#1f4c85"></div>
<div style="position:absolute;left:87px;top:323px;width:10px;height:23px;background:#2459a0"></div>
<div style="position:absolute;left:97px;top:323px;width:10px;height:23px;background:#2a69b8"></div>
<div style="position:absolute;left:107px;top:323px;width:642px;height:23px;background:#fff"></div>
<div style="position:absolute;left:109px;top:328px;width:13px;height:13px;border:1.5px solid #2a2a2e;border-radius:2px;box-sizing:border-box"></div>
<div style="position:absolute;left:131px;top:323px;width:70px;height:23px;line-height:23px;text-align:left;white-space:nowrap;overflow:hidden;font-family:'Liberation Sans',sans-serif;color:#222;font-size:12.8px">02.01.01</div>
<div style="position:absolute;left:206px;top:323px;width:290px;height:23px;line-height:23px;text-align:left;white-space:nowrap;overflow:hidden;font-family:'Liberation Sans',sans-serif;color:#222;font-size:12.8px">Устройство буронабивных свай захватка 1</div>
<div style="position:absolute;left:502px;top:323px;width:119px;height:23px;line-height:23px;text-align:center;white-space:nowrap;overflow:hidden;font-family:'Liberation Sans',sans-serif;color:#222;font-size:12.7px">14.10.2025 09:00</div>
<div style="position:absolute;left:622px;top:323px;width:127px;height:23px;line-height:23px;text-align:center;white-space:nowrap;overflow:hidden;font-family:'Liberation Sans',sans-serif;color:#222;font-size:12.7px">15.10.2025 18:00</div>
<div style="position:absolute;left:201px;top:323px;width:1px;height:23px;background-image:linear-gradient(to bottom,#c4c4c4 0 3px,transparent 3px 5px);background-size:1px 5px"></div>
<div style="position:absolute;left:501px;top:323px;width:1px;height:23px;background-image:linear-gradient(to bottom,#c4c4c4 0 3px,transparent 3px 5px);background-size:1px 5px"></div>
<div style="position:absolute;left:621px;top:323px;width:1px;height:23px;background-image:linear-gradient(to bottom,#c4c4c4 0 3px,transparent 3px 5px);background-size:1px 5px"></div>
<div style="position:absolute;left:107px;top:345px;width:642px;height:1px;background-image:linear-gradient(to right,#c4c4c4 0 3px,transparent 3px 5px);background-size:5px 1px"></div>
<div style="position:absolute;left:45px;top:347.5px;width:21px;height:23px;line-height:23px;text-align:center;white-space:nowrap;overflow:hidden;font-family:'Liberation Sans',sans-serif;color:#222;font-size:11px">10</div>
<div style="position:absolute;left:67px;top:346px;width:10px;height:23px;background:#1a3961"></div>
<div style="position:absolute;left:77px;top:346px;width:10px;height:23px;background:#1f4c85"></div>
<div style="position:absolute;left:87px;top:346px;width:10px;height:23px;background:#2459a0"></div>
<div style="position:absolute;left:97px;top:346px;width:10px;height:23px;background:#2a69b8"></div>
<div style="position:absolute;left:107px;top:346px;width:642px;height:23px;background:#fff"></div>
<div style="position:absolute;left:109px;top:351px;width:13px;height:13px;border:1.5px solid #2a2a2e;border-radius:2px;box-sizing:border-box"></div>
<div style="position:absolute;left:131px;top:346px;width:70px;height:23px;line-height:23px;text-align:left;white-space:nowrap;overflow:hidden;font-family:'Liberation Sans',sans-serif;color:#222;font-size:12.8px">02.01.02</div>
<div style="position:absolute;left:206px;top:346px;width:290px;height:23px;line-height:23px;text-align:left;white-space:nowrap;overflow:hidden;font-family:'Liberation Sans',sans-serif;color:#222;font-size:12.8px">Устройство буронабивных свай захватка 2</div>
<div style="position:absolute;left:502px;top:346px;width:119px;height:23px;line-height:23px;text-align:center;white-space:nowrap;overflow:hidden;font-family:'Liberation Sans',sans-serif;color:#222;font-size:12.7px">16.10.2025 09:00</div>
<div style="position:absolute;left:622px;top:346px;width:127px;height:23px;line-height:23px;text-align:center;white-space:nowrap;overflow:hidden;font-family:'Liberation Sans',sans-serif;color:#222;font-size:12.7px">17.10.2025 18:00</div>
<div style="position:absolute;left:201px;top:346px;width:1px;height:23px;background-image:linear-gradient(to bottom,#c4c4c4 0 3px,transparent 3px 5px);background-size:1px 5px"></div>
<div style="position:absolute;left:501px;top:346px;width:1px;height:23px;background-image:linear-gradient(to bottom,#c4c4c4 0 3px,transparent 3px 5px);background-size:1px 5px"></div>
<div style="position:absolute;left:621px;top:346px;width:1px;height:23px;background-image:linear-gradient(to bottom,#c4c4c4 0 3px,transparent 3px 5px);background-size:1px 5px"></div>
<div style="position:absolute;left:107px;top:368px;width:642px;height:1px;background-image:linear-gradient(to right,#c4c4c4 0 3px,transparent 3px 5px);background-size:5px 1px"></div>
<div style="position:absolute;left:45px;top:370.5px;width:21px;height:23px;line-height:23px;text-align:center;white-space:nowrap;overflow:hidden;font-family:'Liberation Sans',sans-serif;color:#222;font-size:11px">11</div>
<div style="position:absolute;left:67px;top:369px;width:10px;height:23px;background:#1a3961"></div>
<div style="position:absolute;left:77px;top:369px;width:10px;height:23px;background:#1f4c85"></div>
<div style="position:absolute;left:87px;top:369px;width:10px;height:23px;background:#2459a0"></div>
<div style="position:absolute;left:97px;top:369px;width:10px;height:23px;background:#2a69b8"></div>
<div style="position:absolute;left:107px;top:369px;width:642px;height:23px;background:#fff"></div>
<div style="position:absolute;left:109px;top:374px;width:13px;height:13px;border:1.5px solid #2a2a2e;border-radius:2px;box-sizing:border-box"></div>
<div style="position:absolute;left:131px;top:369px;width:70px;height:23px;line-height:23px;text-align:left;white-space:nowrap;overflow:hidden;font-family:'Liberation Sans',sans-serif;color:#222;font-size:12.8px">02.01.03</div>
<div style="position:absolute;left:206px;top:369px;width:290px;height:23px;line-height:23px;text-align:left;white-space:nowrap;overflow:hidden;font-family:'Liberation Sans',sans-serif;color:#222;font-size:12.8px">Устройство буронабивных свай захватка 3</div>
<div style="position:absolute;left:502px;top:369px;width:119px;height:23px;line-height:23px;text-align:center;white-space:nowrap;overflow:hidden;font-family:'Liberation Sans',sans-serif;color:#222;font-size:12.7px">20.10.2025 09:00</div>
<div style="position:absolute;left:622px;top:369px;width:127px;height:23px;line-height:23px;text-align:center;white-space:nowrap;overflow:hidden;font-family:'Liberation Sans',sans-serif;color:#222;font-size:12.7px">21.10.2025 18:00</div>
<div style="position:absolute;left:201px;top:369px;width:1px;height:23px;background-image:linear-gradient(to bottom,#c4c4c4 0 3px,transparent 3px 5px);background-size:1px 5px"></div>
<div style="position:absolute;left:501px;top:369px;width:1px;height:23px;background-image:linear-gradient(to bottom,#c4c4c4 0 3px,transparent 3px 5px);background-size:1px 5px"></div>
<div style="position:absolute;left:621px;top:369px;width:1px;height:23px;background-image:linear-gradient(to bottom,#c4c4c4 0 3px,transparent 3px 5px);background-size:1px 5px"></div>
<div style="position:absolute;left:107px;top:391px;width:642px;height:1px;background-image:linear-gradient(to right,#c4c4c4 0 3px,transparent 3px 5px);background-size:5px 1px"></div>
<div style="position:absolute;left:45px;top:393.5px;width:21px;height:23px;line-height:23px;text-align:center;white-space:nowrap;overflow:hidden;font-family:'Liberation Sans',sans-serif;color:#222;font-size:11px">12</div>
<div style="position:absolute;left:67px;top:392px;width:10px;height:23px;background:#1a3961"></div>
<div style="position:absolute;left:77px;top:392px;width:10px;height:23px;background:#1f4c85"></div>
<div style="position:absolute;left:87px;top:392px;width:10px;height:23px;background:#2459a0"></div>
<div style="position:absolute;left:97px;top:392px;width:10px;height:23px;background:#2a69b8"></div>
<div style="position:absolute;left:107px;top:392px;width:642px;height:23px;background:#fff"></div>
<div style="position:absolute;left:109px;top:397px;width:13px;height:13px;border:1.5px solid #2a2a2e;border-radius:2px;box-sizing:border-box"></div>
<div style="position:absolute;left:131px;top:392px;width:70px;height:23px;line-height:23px;text-align:left;white-space:nowrap;overflow:hidden;font-family:'Liberation Sans',sans-serif;color:#222;font-size:12.8px">02.01.04</div>
<div style="position:absolute;left:206px;top:392px;width:290px;height:23px;line-height:23px;text-align:left;white-space:nowrap;overflow:hidden;font-family:'Liberation Sans',sans-serif;color:#222;font-size:12.8px">Устройство буронабивных свай захватка 4</div>
<div style="position:absolute;left:502px;top:392px;width:119px;height:23px;line-height:23px;text-align:center;white-space:nowrap;overflow:hidden;font-family:'Liberation Sans',sans-serif;color:#222;font-size:12.7px">22.10.2025 09:00</div>
<div style="position:absolute;left:622px;top:392px;width:127px;height:23px;line-height:23px;text-align:center;white-space:nowrap;overflow:hidden;font-family:'Liberation Sans',sans-serif;color:#222;font-size:12.7px">23.10.2025 18:00</div>
<div style="position:absolute;left:201px;top:392px;width:1px;height:23px;background-image:linear-gradient(to bottom,#c4c4c4 0 3px,transparent 3px 5px);background-size:1px 5px"></div>
<div style="position:absolute;left:501px;top:392px;width:1px;height:23px;background-image:linear-gradient(to bottom,#c4c4c4 0 3px,transparent 3px 5px);background-size:1px 5px"></div>
<div style="position:absolute;left:621px;top:392px;width:1px;height:23px;background-image:linear-gradient(to bottom,#c4c4c4 0 3px,transparent 3px 5px);background-size:1px 5px"></div>
<div style="position:absolute;left:107px;top:414px;width:642px;height:1px;background-image:linear-gradient(to right,#c4c4c4 0 3px,transparent 3px 5px);background-size:5px 1px"></div>
<div style="position:absolute;left:45px;top:416.5px;width:21px;height:23px;line-height:23px;text-align:center;white-space:nowrap;overflow:hidden;font-family:'Liberation Sans',sans-serif;color:#222;font-size:11px">13</div>
<div style="position:absolute;left:67px;top:415px;width:10px;height:23px;background:#1a3961"></div>
<div style="position:absolute;left:77px;top:415px;width:10px;height:23px;background:#1f4c85"></div>
<div style="position:absolute;left:87px;top:415px;width:10px;height:23px;background:#2459a0"></div>
<div style="position:absolute;left:97px;top:415px;width:10px;height:23px;background:#2a69b8"></div>
<div style="position:absolute;left:107px;top:415px;width:642px;height:23px;background:#fff"></div>
<div style="position:absolute;left:109px;top:420px;width:13px;height:13px;border:1.5px solid #2a2a2e;border-radius:2px;box-sizing:border-box"></div>
<div style="position:absolute;left:131px;top:415px;width:70px;height:23px;line-height:23px;text-align:left;white-space:nowrap;overflow:hidden;font-family:'Liberation Sans',sans-serif;color:#222;font-size:12.8px">02.01.05</div>
<div style="position:absolute;left:206px;top:415px;width:290px;height:23px;line-height:23px;text-align:left;white-space:nowrap;overflow:hidden;font-family:'Liberation Sans',sans-serif;color:#222;font-size:12.8px">Устройство фундаментной плиты</div>
<div style="position:absolute;left:502px;top:415px;width:119px;height:23px;line-height:23px;text-align:center;white-space:nowrap;overflow:hidden;font-family:'Liberation Sans',sans-serif;color:#222;font-size:12.7px">24.10.2025 09:00</div>
<div style="position:absolute;left:622px;top:415px;width:127px;height:23px;line-height:23px;text-align:center;white-space:nowrap;overflow:hidden;font-family:'Liberation Sans',sans-serif;color:#222;font-size:12.7px">30.10.2025 18:00</div>
<div style="position:absolute;left:201px;top:415px;width:1px;height:23px;background-image:linear-gradient(to bottom,#c4c4c4 0 3px,transparent 3px 5px);background-size:1px 5px"></div>
<div style="position:absolute;left:501px;top:415px;width:1px;height:23px;background-image:linear-gradient(to bottom,#c4c4c4 0 3px,transparent 3px 5px);background-size:1px 5px"></div>
<div style="position:absolute;left:621px;top:415px;width:1px;height:23px;background-image:linear-gradient(to bottom,#c4c4c4 0 3px,transparent 3px 5px);background-size:1px 5px"></div>
<div style="position:absolute;left:107px;top:437px;width:642px;height:1px;background-image:linear-gradient(to right,#c4c4c4 0 3px,transparent 3px 5px);background-size:5px 1px"></div>
<div style="position:absolute;left:45px;top:439.5px;width:21px;height:23px;line-height:23px;text-align:center;white-space:nowrap;overflow:hidden;font-family:'Liberation Sans',sans-serif;color:#222;font-size:11px">14</div>
<div style="position:absolute;left:67px;top:438px;width:10px;height:23px;background:#1a3961"></div>
<div style="position:absolute;left:77px;top:438px;width:10px;height:23px;background:#1f4c85"></div>
<div style="position:absolute;left:87px;top:438px;width:10px;height:23px;background:#2459a0"></div>
<div style="position:absolute;left:97px;top:438px;width:652px;height:23px;background:#2a69b8"></div>
<div style="position:absolute;left:98px;top:448px;width:9px;height:2px;background:#fff"></div>
<div style="position:absolute;left:109px;top:443px;width:13px;height:13px;border:1.5px solid #fff;border-radius:2px;box-sizing:border-box"></div>
<div style="position:absolute;left:131px;top:439px;width:70px;height:23px;line-height:23px;text-align:left;white-space:nowrap;overflow:hidden;font-family:'Liberation Sans',sans-serif;color:#fff;font-weight:bold;font-size:12.5px;letter-spacing:-0.6px">OP_syn.1....</div>
<div style="position:absolute;left:206px;top:439px;width:290px;height:23px;line-height:23px;text-align:left;white-space:nowrap;overflow:hidden;font-family:'Liberation Sans',sans-serif;color:#fff;font-weight:bold;font-size:12.5px;letter-spacing:-0.4px">Монолитные работы подземной части</div>
<div style="position:absolute;left:502px;top:439px;width:119px;height:23px;line-height:23px;text-align:center;white-space:nowrap;overflow:hidden;font-family:'Liberation Sans',sans-serif;color:#fff;font-weight:bold;font-size:12.4px">31.10.2025 09:00</div>
<div style="position:absolute;left:622px;top:439px;width:127px;height:23px;line-height:23px;text-align:center;white-space:nowrap;overflow:hidden;font-family:'Liberation Sans',sans-serif;color:#fff;font-weight:bold;font-size:12.4px">17.11.2025 18:00</div>
<div style="position:absolute;left:749px;top:89px;width:12px;height:372px;background:#f4f4f6"></div>
<div style="position:absolute;left:750px;top:91px;width:10px;height:28px;background:#d8d8dc;border-radius:5px"></div>
<div style="position:absolute;left:45px;top:461px;width:716px;height:13px;background:#f0f0f3"></div>
<div style="position:absolute;left:46px;top:462px;width:625px;height:11px;background:#dadade;border-radius:5px"></div>
<div style="position:absolute;left:761px;top:44px;width:6px;height:430px;background:#b3b3b9"></div>
<div style="position:absolute;left:767px;top:89px;width:1151px;height:385px;background:#fff"></div>
<div style="position:absolute;left:774px;top:89px;width:270px;height:25px;line-height:25px;text-align:center;white-space:nowrap;overflow:hidden;font-family:'Liberation Sans',sans-serif;color:#222;font-size:11.5px">10.11.2025</div>
<div style="position:absolute;left:774px;top:114px;width:90px;height:25px;line-height:25px;text-align:center;white-space:nowrap;overflow:hidden;font-family:'Liberation Sans',sans-serif;color:#222;font-size:11.5px">Согл.план</div>
<div style="position:absolute;left:864px;top:114px;width:90px;height:25px;line-height:25px;text-align:center;white-space:nowrap;overflow:hidden;font-family:'Liberation Sans',sans-serif;color:#222;font-size:11.5px">Опер.план</div>
<div style="position:absolute;left:954px;top:114px;width:90px;height:25px;line-height:25px;text-align:center;white-space:nowrap;overflow:hidden;font-family:'Liberation Sans',sans-serif;color:#222;font-size:11.5px">Факт</div>
<div style="position:absolute;left:864px;top:114px;width:1px;height:25px;background-image:linear-gradient(to bottom,#c4c4c4 0 3px,transparent 3px 5px);background-size:1px 5px"></div>
<div style="position:absolute;left:954px;top:114px;width:1px;height:25px;background-image:linear-gradient(to bottom,#c4c4c4 0 3px,transparent 3px 5px);background-size:1px 5px"></div>
<div style="position:absolute;left:1044px;top:89px;width:270px;height:25px;line-height:25px;text-align:center;white-space:nowrap;overflow:hidden;font-family:'Liberation Sans',sans-serif;color:#222;font-size:11.5px">11.11.2025</div>
<div style="position:absolute;left:1044px;top:114px;width:90px;height:25px;line-height:25px;text-align:center;white-space:nowrap;overflow:hidden;font-family:'Liberation Sans',sans-serif;color:#222;font-size:11.5px">Согл.план</div>
<div style="position:absolute;left:1134px;top:114px;width:90px;height:25px;line-height:25px;text-align:center;white-space:nowrap;overflow:hidden;font-family:'Liberation Sans',sans-serif;color:#222;font-size:11.5px">Опер.план</div>
<div style="position:absolute;left:1224px;top:114px;width:90px;height:25px;line-height:25px;text-align:center;white-space:nowrap;overflow:hidden;font-family:'Liberation Sans',sans-serif;color:#222;font-size:11.5px">Факт</div>
<div style="position:absolute;left:1134px;top:114px;width:1px;height:25px;background-image:linear-gradient(to bottom,#c4c4c4 0 3px,transparent 3px 5px);background-size:1px 5px"></div>
<div style="position:absolute;left:1224px;top:114px;width:1px;height:25px;background-image:linear-gradient(to bottom,#c4c4c4 0 3px,transparent 3px 5px);background-size:1px 5px"></div>
<div style="position:absolute;left:1314px;top:89px;width:270px;height:25px;line-height:25px;text-align:center;white-space:nowrap;overflow:hidden;font-family:'Liberation Sans',sans-serif;color:#222;font-size:11.5px">12.11.2025</div>
<div style="position:absolute;left:1314px;top:114px;width:90px;height:25px;line-height:25px;text-align:center;white-space:nowrap;overflow:hidden;font-family:'Liberation Sans',sans-serif;color:#222;font-size:11.5px">Согл.план</div>
<div style="position:absolute;left:1404px;top:114px;width:90px;height:25px;line-height:25px;text-align:center;white-space:nowrap;overflow:hidden;font-family:'Liberation Sans',sans-serif;color:#222;font-size:11.5px">Опер.план</div>
<div style="position:absolute;left:1494px;top:114px;width:90px;height:25px;line-height:25px;text-align:center;white-space:nowrap;overflow:hidden;font-family:'Liberation Sans',sans-serif;color:#222;font-size:11.5px">Факт</div>
<div style="position:absolute;left:1404px;top:114px;width:1px;height:25px;background-image:linear-gradient(to bottom,#c4c4c4 0 3px,transparent 3px 5px);background-size:1px 5px"></div>
<div style="position:absolute;left:1494px;top:114px;width:1px;height:25px;background-image:linear-gradient(to bottom,#c4c4c4 0 3px,transparent 3px 5px);background-size:1px 5px"></div>
<div style="position:absolute;left:1584px;top:114px;width:85px;height:25px;line-height:25px;text-align:center;white-space:nowrap;overflow:hidden;font-family:'Liberation Sans',sans-serif;color:#222;font-size:11.5px;text-indent:10px">Согл.план</div>
<div style="position:absolute;left:1671px;top:89px;width:238px;height:25px;line-height:25px;text-align:center;white-space:nowrap;overflow:hidden;font-family:'Liberation Sans',sans-serif;color:#222;font-size:11.5px">Суммарно</div>
<svg style="position:absolute;left:1684.0px;top:92.0px;" width="20" height="20" viewBox="0 0 20 20" fill="none" stroke="#333" stroke-width="1.6" stroke-linecap="round" stroke-linejoin="round"><path d="M14 2L6 10l8 8"/></svg>
<svg style="position:absolute;left:1876.0px;top:92.0px;" width="20" height="20" viewBox="0 0 20 20" fill="none" stroke="#333" stroke-width="1.6" stroke-linecap="round" stroke-linejoin="round"><path d="M6 2l8 8-8 8"/></svg>
<div style="position:absolute;left:1669px;top:114px;width:79px;height:25px;line-height:25px;text-align:center;white-space:nowrap;overflow:hidden;font-family:'Liberation Sans',sans-serif;color:#222;font-size:11.5px">Согл.план</div>
<div style="position:absolute;left:1748px;top:114px;width:79px;height:25px;line-height:25px;text-align:center;white-space:nowrap;overflow:hidden;font-family:'Liberation Sans',sans-serif;color:#222;font-size:11.5px">Опер.план</div>
<div style="position:absolute;left:1827px;top:114px;width:79px;height:25px;line-height:25px;text-align:center;white-space:nowrap;overflow:hidden;font-family:'Liberation Sans',sans-serif;color:#222;font-size:11.5px">Факт</div>
<div style="position:absolute;left:1748px;top:114px;width:1px;height:25px;background-image:linear-gradient(to bottom,#c4c4c4 0 3px,transparent 3px 5px);background-size:1px 5px"></div>
<div style="position:absolute;left:1827px;top:114px;width:1px;height:25px;background-image:linear-gradient(to bottom,#c4c4c4 0 3px,transparent 3px 5px);background-size:1px 5px"></div>
<div style="position:absolute;left:774px;top:89px;width:1px;height:50px;background:#c3c3ca"></div>
<div style="position:absolute;left:1044px;top:89px;width:1px;height:50px;background:#c3c3ca"></div>
<div style="position:absolute;left:1314px;top:89px;width:1px;height:50px;background:#c3c3ca"></div>
<div style="position:absolute;left:1584px;top:89px;width:1px;height:50px;background:#c3c3ca"></div>
<div style="position:absolute;left:1669px;top:89px;width:1px;height:50px;background:#c3c3ca"></div>
<div style="position:absolute;left:1907px;top:89px;width:1px;height:50px;background:#c3c3ca"></div>
<div style="position:absolute;left:774px;top:113px;width:1133px;height:1px;background:#c3c3ca"></div>
<div style="position:absolute;left:767px;top:139px;width:1141px;height:1px;background:#d0d0d4"></div>
<div style="position:absolute;left:767px;top:139px;width:1141px;height:23px;background:#1a3961"></div>
<div style="position:absolute;left:774px;top:137px;width:90px;height:23px;line-height:23px;text-align:center;white-space:nowrap;overflow:hidden;font-family:'Liberation Sans',sans-serif;color:#fff;font-size:11.5px">61 829.8</div>
<div style="position:absolute;left:864px;top:137px;width:90px;height:23px;line-height:23px;text-align:center;white-space:nowrap;overflow:hidden;font-family:'Liberation Sans',sans-serif;color:#fff;font-size:11.5px">61 829.8</div>
<div style="position:absolute;left:954px;top:137px;width:90px;height:23px;line-height:23px;text-align:center;white-space:nowrap;overflow:hidden;font-family:'Liberation Sans',sans-serif;color:#2bb24c;font-size:11.5px">61 829.8</div>
<div style="position:absolute;left:1044px;top:137px;width:90px;height:23px;line-height:23px;text-align:center;white-space:nowrap;overflow:hidden;font-family:'Liberation Sans',sans-serif;color:#fff;font-size:11.5px">61 839.87</div>
<div style="position:absolute;left:1134px;top:137px;width:90px;height:23px;line-height:23px;text-align:center;white-space:nowrap;overflow:hidden;font-family:'Liberation Sans',sans-serif;color:#fff;font-size:11.5px">61 839.87</div>
<div style="position:absolute;left:1224px;top:137px;width:90px;height:23px;line-height:23px;text-align:center;white-space:nowrap;overflow:hidden;font-family:'Liberation Sans',sans-serif;color:#2bb24c;font-size:11.5px">61 839.87</div>
<div style="position:absolute;left:1314px;top:137px;width:90px;height:23px;line-height:23px;text-align:center;white-space:nowrap;overflow:hidden;font-family:'Liberation Sans',sans-serif;color:#fff;font-size:11.5px">105 860</div>
<div style="position:absolute;left:1404px;top:137px;width:90px;height:23px;line-height:23px;text-align:center;white-space:nowrap;overflow:hidden;font-family:'Liberation Sans',sans-serif;color:#fff;font-size:11.5px">105 860</div>
<div style="position:absolute;left:1494px;top:137px;width:90px;height:23px;line-height:23px;text-align:center;white-space:nowrap;overflow:hidden;font-family:'Liberation Sans',sans-serif;color:#2bb24c;font-size:11.5px">105 860</div>
<div style="position:absolute;left:1584px;top:137px;width:85px;height:23px;line-height:23px;text-align:center;white-space:nowrap;overflow:hidden;font-family:'Liberation Sans',sans-serif;color:#fff;font-size:11.5px">105 860</div>
<div style="position:absolute;left:1670.5px;top:137px;width:79px;height:23px;line-height:23px;text-align:center;white-space:nowrap;overflow:hidden;font-family:'Liberation Sans',sans-serif;color:#fff;font-size:11.5px">26 008 582.207</div>
<div style="position:absolute;left:1749.5px;top:137px;width:79px;height:23px;line-height:23px;text-align:center;white-space:nowrap;overflow:hidden;font-family:'Liberation Sans',sans-serif;color:#fff;font-size:11.5px">26 008 582.207</div>
<div style="position:absolute;left:1828.5px;top:137px;width:79px;height:23px;line-height:23px;text-align:center;white-space:nowrap;overflow:hidden;font-family:'Liberation Sans',sans-serif;color:#fff;font-size:11.5px">16 052 211.607</div>
<div style="position:absolute;left:767px;top:162px;width:1141px;height:23px;background:#1f4c85"></div>
<div style="position:absolute;left:774px;top:160px;width:90px;height:23px;line-height:23px;text-align:center;white-space:nowrap;overflow:hidden;font-family:'Liberation Sans',sans-serif;color:#fff;font-size:11.5px">61 829.8</div>
<div style="position:absolute;left:864px;top:160px;width:90px;height:23px;line-height:23px;text-align:center;white-space:nowrap;overflow:hidden;font-family:'Liberation Sans',sans-serif;color:#fff;font-size:11.5px">61 829.8</div>
<div style="position:absolute;left:954px;top:160px;width:90px;height:23px;line-height:23px;text-align:center;white-space:nowrap;overflow:hidden;font-family:'Liberation Sans',sans-serif;color:#2bb24c;font-size:11.5px">61 829.8</div>
<div style="position:absolute;left:1044px;top:160px;width:90px;height:23px;line-height:23px;text-align:center;white-space:nowrap;overflow:hidden;font-family:'Liberation Sans',sans-serif;color:#fff;font-size:11.5px">61 839.87</div>
<div style="position:absolute;left:1134px;top:160px;width:90px;height:23px;line-height:23px;text-align:center;white-space:nowrap;overflow:hidden;font-family:'Liberation Sans',sans-serif;color:#fff;font-size:11.5px">61 839.87</div>
<div style="position:absolute;left:1224px;top:160px;width:90px;height:23px;line-height:23px;text-align:center;white-space:nowrap;overflow:hidden;font-family:'Liberation Sans',sans-serif;color:#2bb24c;font-size:11.5px">61 839.87</div>
<div style="position:absolute;left:1314px;top:160px;width:90px;height:23px;line-height:23px;text-align:center;white-space:nowrap;overflow:hidden;font-family:'Liberation Sans',sans-serif;color:#fff;font-size:11.5px">105 860</div>
<div style="position:absolute;left:1404px;top:160px;width:90px;height:23px;line-height:23px;text-align:center;white-space:nowrap;overflow:hidden;font-family:'Liberation Sans',sans-serif;color:#fff;font-size:11.5px">105 860</div>
<div style="position:absolute;left:1494px;top:160px;width:90px;height:23px;line-height:23px;text-align:center;white-space:nowrap;overflow:hidden;font-family:'Liberation Sans',sans-serif;color:#2bb24c;font-size:11.5px">105 860</div>
<div style="position:absolute;left:1584px;top:160px;width:85px;height:23px;line-height:23px;text-align:center;white-space:nowrap;overflow:hidden;font-family:'Liberation Sans',sans-serif;color:#fff;font-size:11.5px">105 860</div>
<div style="position:absolute;left:1670.5px;top:160px;width:79px;height:23px;line-height:23px;text-align:center;white-space:nowrap;overflow:hidden;font-family:'Liberation Sans',sans-serif;color:#fff;font-size:11.5px">26 008 582.207</div>
<div style="position:absolute;left:1749.5px;top:160px;width:79px;height:23px;line-height:23px;text-align:center;white-space:nowrap;overflow:hidden;font-family:'Liberation Sans',sans-serif;color:#fff;font-size:11.5px">26 008 582.207</div>
<div style="position:absolute;left:1828.5px;top:160px;width:79px;height:23px;line-height:23px;text-align:center;white-space:nowrap;overflow:hidden;font-family:'Liberation Sans',sans-serif;color:#fff;font-size:11.5px">16 052 211.607</div>
<div style="position:absolute;left:767px;top:185px;width:1141px;height:23px;background:#2459a0"></div>
<div style="position:absolute;left:1670.5px;top:183px;width:79px;height:23px;line-height:23px;text-align:center;white-space:nowrap;overflow:hidden;font-family:'Liberation Sans',sans-serif;color:#fff;font-size:11.5px">179 445</div>
<div style="position:absolute;left:1749.5px;top:183px;width:79px;height:23px;line-height:23px;text-align:center;white-space:nowrap;overflow:hidden;font-family:'Liberation Sans',sans-serif;color:#fff;font-size:11.5px">179 445</div>
<div style="position:absolute;left:1828.5px;top:183px;width:79px;height:23px;line-height:23px;text-align:center;white-space:nowrap;overflow:hidden;font-family:'Liberation Sans',sans-serif;color:#fff;font-size:11.5px">150 955</div>
<div style="position:absolute;left:767px;top:208px;width:1141px;height:23px;background:#fff"></div>
<div style="position:absolute;left:1669px;top:208px;width:238px;height:23px;background:#f3f3f5"></div>
<div style="position:absolute;left:774px;top:208px;width:1px;height:23px;background:#c3c3ca"></div>
<div style="position:absolute;left:1044px;top:208px;width:1px;height:23px;background:#c3c3ca"></div>
<div style="position:absolute;left:1314px;top:208px;width:1px;height:23px;background:#c3c3ca"></div>
<div style="position:absolute;left:1584px;top:208px;width:1px;height:23px;background:#c3c3ca"></div>
<div style="position:absolute;left:1669px;top:208px;width:1px;height:23px;background:#c3c3ca"></div>
<div style="position:absolute;left:864px;top:208px;width:1px;height:23px;background-image:linear-gradient(to bottom,#c4c4c4 0 3px,transparent 3px 5px);background-size:1px 5px"></div>
<div style="position:absolute;left:954px;top:208px;width:1px;height:23px;background-image:linear-gradient(to bottom,#c4c4c4 0 3px,transparent 3px 5px);background-size:1px 5px"></div>
<div style="position:absolute;left:1134px;top:208px;width:1px;height:23px;background-image:linear-gradient(to bottom,#c4c4c4 0 3px,transparent 3px 5px);background-size:1px 5px"></div>
<div style="position:absolute;left:1224px;top:208px;width:1px;height:23px;background-image:linear-gradient(to bottom,#c4c4c4 0 3px,transparent 3px 5px);background-size:1px 5px"></div>
<div style="position:absolute;left:1404px;top:208px;width:1px;height:23px;background-image:linear-gradient(to bottom,#c4c4c4 0 3px,transparent 3px 5px);background-size:1px 5px"></div>
<div style="position:absolute;left:1494px;top:208px;width:1px;height:23px;background-image:linear-gradient(to bottom,#c4c4c4 0 3px,transparent 3px 5px);background-size:1px 5px"></div>
<div style="position:absolute;left:1748px;top:208px;width:1px;height:23px;background-image:linear-gradient(to bottom,#c4c4c4 0 3px,transparent 3px 5px);background-size:1px 5px"></div>
<div style="position:absolute;left:1827px;top:208px;width:1px;height:23px;background-image:linear-gradient(to bottom,#c4c4c4 0 3px,transparent 3px 5px);background-size:1px 5px"></div>
<div style="position:absolute;left:1907px;top:208px;width:1px;height:23px;background-image:linear-gradient(to bottom,#c4c4c4 0 3px,transparent 3px 5px);background-size:1px 5px"></div>
<div style="position:absolute;left:767px;top:230px;width:1141px;height:1px;background-image:linear-gradient(to right,#c4c4c4 0 3px,transparent 3px 5px);background-size:5px 1px"></div>
<div style="position:absolute;left:1670.5px;top:206px;width:79px;height:23px;line-height:23px;text-align:center;white-space:nowrap;overflow:hidden;font-family:'Liberation Sans',sans-serif;color:#222;font-size:11.5px">66 220</div>
<div style="position:absolute;left:1749.5px;top:206px;width:79px;height:23px;line-height:23px;text-align:center;white-space:nowrap;overflow:hidden;font-family:'Liberation Sans',sans-serif;color:#222;font-size:11.5px">66 220</div>
<div style="position:absolute;left:1828.5px;top:206px;width:79px;height:23px;line-height:23px;text-align:center;white-space:nowrap;overflow:hidden;font-family:'Liberation Sans',sans-serif;color:#222;font-size:11.5px">66 220</div>
<div style="position:absolute;left:767px;top:231px;width:1141px;height:23px;background:#fff"></div>
<div style="position:absolute;left:1669px;top:231px;width:238px;height:23px;background:#f3f3f5"></div>
<div style="position:absolute;left:774px;top:231px;width:1px;height:23px;background:#c3c3ca"></div>
<div style="position:absolute;left:1044px;top:231px;width:1px;height:23px;background:#c3c3ca"></div>
<div style="position:absolute;left:1314px;top:231px;width:1px;height:23px;background:#c3c3ca"></div>
<div style="position:absolute;left:1584px;top:231px;width:1px;height:23px;background:#c3c3ca"></div>
<div style="position:absolute;left:1669px;top:231px;width:1px;height:23px;background:#c3c3ca"></div>
<div style="position:absolute;left:864px;top:231px;width:1px;height:23px;background-image:linear-gradient(to bottom,#c4c4c4 0 3px,transparent 3px 5px);background-size:1px 5px"></div>
<div style="position:absolute;left:954px;top:231px;width:1px;height:23px;background-image:linear-gradient(to bottom,#c4c4c4 0 3px,transparent 3px 5px);background-size:1px 5px"></div>
<div style="position:absolute;left:1134px;top:231px;width:1px;height:23px;background-image:linear-gradient(to bottom,#c4c4c4 0 3px,transparent 3px 5px);background-size:1px 5px"></div>
<div style="position:absolute;left:1224px;top:231px;width:1px;height:23px;background-image:linear-gradient(to bottom,#c4c4c4 0 3px,transparent 3px 5px);background-size:1px 5px"></div>
<div style="position:absolute;left:1404px;top:231px;width:1px;height:23px;background-image:linear-gradient(to bottom,#c4c4c4 0 3px,transparent 3px 5px);background-size:1px 5px"></div>
<div style="position:absolute;left:1494px;top:231px;width:1px;height:23px;background-image:linear-gradient(to bottom,#c4c4c4 0 3px,transparent 3px 5px);background-size:1px 5px"></div>
<div style="position:absolute;left:1748px;top:231px;width:1px;height:23px;background-image:linear-gradient(to bottom,#c4c4c4 0 3px,transparent 3px 5px);background-size:1px 5px"></div>
<div style="position:absolute;left:1827px;top:231px;width:1px;height:23px;background-image:linear-gradient(to bottom,#c4c4c4 0 3px,transparent 3px 5px);background-size:1px 5px"></div>
<div style="position:absolute;left:1907px;top:231px;width:1px;height:23px;background-image:linear-gradient(to bottom,#c4c4c4 0 3px,transparent 3px 5px);background-size:1px 5px"></div>
<div style="position:absolute;left:767px;top:253px;width:1141px;height:1px;background-image:linear-gradient(to right,#c4c4c4 0 3px,transparent 3px 5px);background-size:5px 1px"></div>
<div style="position:absolute;left:1670.5px;top:229px;width:79px;height:23px;line-height:23px;text-align:center;white-space:nowrap;overflow:hidden;font-family:'Liberation Sans',sans-serif;color:#222;font-size:11.5px">42 000</div>
<div style="position:absolute;left:1749.5px;top:229px;width:79px;height:23px;line-height:23px;text-align:center;white-space:nowrap;overflow:hidden;font-family:'Liberation Sans',sans-serif;color:#222;font-size:11.5px">42 000</div>
<div style="position:absolute;left:1828.5px;top:229px;width:79px;height:23px;line-height:23px;text-align:center;white-space:nowrap;overflow:hidden;font-family:'Liberation Sans',sans-serif;color:#222;font-size:11.5px">42 000</div>
<div style="position:absolute;left:767px;top:254px;width:1141px;height:23px;background:#deeaf7"></div>
<div style="position:absolute;left:1669px;top:254px;width:238px;height:23px;background:#dde9f7"></div>
<div style="position:absolute;left:774px;top:254px;width:1px;height:23px;background:#c3c3ca"></div>
<div style="position:absolute;left:1044px;top:254px;width:1px;height:23px;background:#c3c3ca"></div>
<div style="position:absolute;left:1314px;top:254px;width:1px;height:23px;background:#c3c3ca"></div>
<div style="position:absolute;left:1584px;top:254px;width:1px;height:23px;background:#c3c3ca"></div>
<div style="position:absolute;left:1669px;top:254px;width:1px;height:23px;background:#c3c3ca"></div>
<div style="position:absolute;left:864px;top:254px;width:1px;height:23px;background-image:linear-gradient(to bottom,#c4c4c4 0 3px,transparent 3px 5px);background-size:1px 5px"></div>
<div style="position:absolute;left:954px;top:254px;width:1px;height:23px;background-image:linear-gradient(to bottom,#c4c4c4 0 3px,transparent 3px 5px);background-size:1px 5px"></div>
<div style="position:absolute;left:1134px;top:254px;width:1px;height:23px;background-image:linear-gradient(to bottom,#c4c4c4 0 3px,transparent 3px 5px);background-size:1px 5px"></div>
<div style="position:absolute;left:1224px;top:254px;width:1px;height:23px;background-image:linear-gradient(to bottom,#c4c4c4 0 3px,transparent 3px 5px);background-size:1px 5px"></div>
<div style="position:absolute;left:1404px;top:254px;width:1px;height:23px;background-image:linear-gradient(to bottom,#c4c4c4 0 3px,transparent 3px 5px);background-size:1px 5px"></div>
<div style="position:absolute;left:1494px;top:254px;width:1px;height:23px;background-image:linear-gradient(to bottom,#c4c4c4 0 3px,transparent 3px 5px);background-size:1px 5px"></div>
<div style="position:absolute;left:1748px;top:254px;width:1px;height:23px;background-image:linear-gradient(to bottom,#c4c4c4 0 3px,transparent 3px 5px);background-size:1px 5px"></div>
<div style="position:absolute;left:1827px;top:254px;width:1px;height:23px;background-image:linear-gradient(to bottom,#c4c4c4 0 3px,transparent 3px 5px);background-size:1px 5px"></div>
<div style="position:absolute;left:1907px;top:254px;width:1px;height:23px;background-image:linear-gradient(to bottom,#c4c4c4 0 3px,transparent 3px 5px);background-size:1px 5px"></div>
<div style="position:absolute;left:767px;top:276px;width:1141px;height:1px;background-image:linear-gradient(to right,#c4c4c4 0 3px,transparent 3px 5px);background-size:5px 1px"></div>
<div style="position:absolute;left:1670.5px;top:252px;width:79px;height:23px;line-height:23px;text-align:center;white-space:nowrap;overflow:hidden;font-family:'Liberation Sans',sans-serif;color:#222;font-size:11.5px">71 225</div>
<div style="position:absolute;left:1749.5px;top:252px;width:79px;height:23px;line-height:23px;text-align:center;white-space:nowrap;overflow:hidden;font-family:'Liberation Sans',sans-serif;color:#222;font-size:11.5px">71 225</div>
<div style="position:absolute;left:1828.5px;top:252px;width:79px;height:23px;line-height:23px;text-align:center;white-space:nowrap;overflow:hidden;font-family:'Liberation Sans',sans-serif;color:#222;font-size:11.5px">42 735</div>
<div style="position:absolute;left:767px;top:277px;width:1141px;height:23px;background:#2459a0"></div>
<div style="position:absolute;left:774px;top:275px;width:90px;height:23px;line-height:23px;text-align:center;white-space:nowrap;overflow:hidden;font-family:'Liberation Sans',sans-serif;color:#fff;font-size:11.5px">61 829.8</div>
<div style="position:absolute;left:864px;top:275px;width:90px;height:23px;line-height:23px;text-align:center;white-space:nowrap;overflow:hidden;font-family:'Liberation Sans',sans-serif;color:#fff;font-size:11.5px">61 829.8</div>
<div style="position:absolute;left:954px;top:275px;width:90px;height:23px;line-height:23px;text-align:center;white-space:nowrap;overflow:hidden;font-family:'Liberation Sans',sans-serif;color:#2bb24c;font-size:11.5px">61 829.8</div>
<div style="position:absolute;left:1044px;top:275px;width:90px;height:23px;line-height:23px;text-align:center;white-space:nowrap;overflow:hidden;font-family:'Liberation Sans',sans-serif;color:#fff;font-size:11.5px">61 839.87</div>
<div style="position:absolute;left:1134px;top:275px;width:90px;height:23px;line-height:23px;text-align:center;white-space:nowrap;overflow:hidden;font-family:'Liberation Sans',sans-serif;color:#fff;font-size:11.5px">61 839.87</div>
<div style="position:absolute;left:1224px;top:275px;width:90px;height:23px;line-height:23px;text-align:center;white-space:nowrap;overflow:hidden;font-family:'Liberation Sans',sans-serif;color:#2bb24c;font-size:11.5px">61 839.87</div>
<div style="position:absolute;left:1314px;top:275px;width:90px;height:23px;line-height:23px;text-align:center;white-space:nowrap;overflow:hidden;font-family:'Liberation Sans',sans-serif;color:#fff;font-size:11.5px">105 860</div>
<div style="position:absolute;left:1404px;top:275px;width:90px;height:23px;line-height:23px;text-align:center;white-space:nowrap;overflow:hidden;font-family:'Liberation Sans',sans-serif;color:#fff;font-size:11.5px">105 860</div>
<div style="position:absolute;left:1494px;top:275px;width:90px;height:23px;line-height:23px;text-align:center;white-space:nowrap;overflow:hidden;font-family:'Liberation Sans',sans-serif;color:#2bb24c;font-size:11.5px">105 860</div>
<div style="position:absolute;left:1584px;top:275px;width:85px;height:23px;line-height:23px;text-align:center;white-space:nowrap;overflow:hidden;font-family:'Liberation Sans',sans-serif;color:#fff;font-size:11.5px">105 860</div>
<div style="position:absolute;left:1670.5px;top:275px;width:79px;height:23px;line-height:23px;text-align:center;white-space:nowrap;overflow:hidden;font-family:'Liberation Sans',sans-serif;color:#fff;font-size:11.5px">5 225 168.607</div>
<div style="position:absolute;left:1749.5px;top:275px;width:79px;height:23px;line-height:23px;text-align:center;white-space:nowrap;overflow:hidden;font-family:'Liberation Sans',sans-serif;color:#fff;font-size:11.5px">5 225 168.607</div>
<div style="position:absolute;left:1828.5px;top:275px;width:79px;height:23px;line-height:23px;text-align:center;white-space:nowrap;overflow:hidden;font-family:'Liberation Sans',sans-serif;color:#fff;font-size:11.5px">5 225 168.607</div>
<div style="position:absolute;left:767px;top:300px;width:1141px;height:23px;background:#2a69b8"></div>
<div style="position:absolute;left:1670.5px;top:298px;width:79px;height:23px;line-height:23px;text-align:center;white-space:nowrap;overflow:hidden;font-family:'Liberation Sans',sans-serif;color:#fff;font-size:11.5px">888 460</div>
<div style="position:absolute;left:1749.5px;top:298px;width:79px;height:23px;line-height:23px;text-align:center;white-space:nowrap;overflow:hidden;font-family:'Liberation Sans',sans-serif;color:#fff;font-size:11.5px">888 460</div>
<div style="position:absolute;left:1828.5px;top:298px;width:79px;height:23px;line-height:23px;text-align:center;white-space:nowrap;overflow:hidden;font-family:'Liberation Sans',sans-serif;color:#fff;font-size:11.5px">888 460</div>
<div style="position:absolute;left:767px;top:323px;width:1141px;height:23px;background:#fff"></div>
<div style="position:absolute;left:1669px;top:323px;width:238px;height:23px;background:#f3f3f5"></div>
<div style="position:absolute;left:774px;top:323px;width:1px;height:23px;background:#c3c3ca"></div>
<div style="position:absolute;left:1044px;top:323px;width:1px;height:23px;background:#c3c3ca"></div>
<div style="position:absolute;left:1314px;top:323px;width:1px;height:23px;background:#c3c3ca"></div>
<div style="position:absolute;left:1584px;top:323px;width:1px;height:23px;background:#c3c3ca"></div>
<div style="position:absolute;left:1669px;top:323px;width:1px;height:23px;background:#c3c3ca"></div>
<div style="position:absolute;left:864px;top:323px;width:1px;height:23px;background-image:linear-gradient(to bottom,#c4c4c4 0 3px,transparent 3px 5px);background-size:1px 5px"></div>
<div style="position:absolute;left:954px;top:323px;width:1px;height:23px;background-image:linear-gradient(to bottom,#c4c4c4 0 3px,transparent 3px 5px);background-size:1px 5px"></div>
<div style="position:absolute;left:1134px;top:323px;width:1px;height:23px;background-image:linear-gradient(to bottom,#c4c4c4 0 3px,transparent 3px 5px);background-size:1px 5px"></div>
<div style="position:absolute;left:1224px;top:323px;width:1px;height:23px;background-image:linear-gradient(to bottom,#c4c4c4 0 3px,transparent 3px 5px);background-size:1px 5px"></div>
<div style="position:absolute;left:1404px;top:323px;width:1px;height:23px;background-image:linear-gradient(to bottom,#c4c4c4 0 3px,transparent 3px 5px);background-size:1px 5px"></div>
<div style="position:absolute;left:1494px;top:323px;width:1px;height:23px;background-image:linear-gradient(to bottom,#c4c4c4 0 3px,transparent 3px 5px);background-size:1px 5px"></div>
<div style="position:absolute;left:1748px;top:323px;width:1px;height:23px;background-image:linear-gradient(to bottom,#c4c4c4 0 3px,transparent 3px 5px);background-size:1px 5px"></div>
<div style="position:absolute;left:1827px;top:323px;width:1px;height:23px;background-image:linear-gradient(to bottom,#c4c4c4 0 3px,transparent 3px 5px);background-size:1px 5px"></div>
<div style="position:absolute;left:1907px;top:323px;width:1px;height:23px;background-image:linear-gradient(to bottom,#c4c4c4 0 3px,transparent 3px 5px);background-size:1px 5px"></div>
<div style="position:absolute;left:767px;top:345px;width:1141px;height:1px;background-image:linear-gradient(to right,#c4c4c4 0 3px,transparent 3px 5px);background-size:5px 1px"></div>
<div style="position:absolute;left:1670.5px;top:321px;width:79px;height:23px;line-height:23px;text-align:center;white-space:nowrap;overflow:hidden;font-family:'Liberation Sans',sans-serif;color:#222;font-size:11.5px">103 040</div>
<div style="position:absolute;left:1749.5px;top:321px;width:79px;height:23px;line-height:23px;text-align:center;white-space:nowrap;overflow:hidden;font-family:'Liberation Sans',sans-serif;color:#222;font-size:11.5px">103 040</div>
<div style="position:absolute;left:1828.5px;top:321px;width:79px;height:23px;line-height:23px;text-align:center;white-space:nowrap;overflow:hidden;font-family:'Liberation Sans',sans-serif;color:#222;font-size:11.5px">103 040</div>
<div style="position:absolute;left:767px;top:346px;width:1141px;height:23px;background:#fff"></div>
<div style="position:absolute;left:1669px;top:346px;width:238px;height:23px;background:#f3f3f5"></div>
<div style="position:absolute;left:774px;top:346px;width:1px;height:23px;background:#c3c3ca"></div>
<div style="position:absolute;left:1044px;top:346px;width:1px;height:23px;background:#c3c3ca"></div>
<div style="position:absolute;left:1314px;top:346px;width:1px;height:23px;background:#c3c3ca"></div>
<div style="position:absolute;left:1584px;top:346px;width:1px;height:23px;background:#c3c3ca"></div>
<div style="position:absolute;left:1669px;top:346px;width:1px;height:23px;background:#c3c3ca"></div>
<div style="position:absolute;left:864px;top:346px;width:1px;height:23px;background-image:linear-gradient(to bottom,#c4c4c4 0 3px,transparent 3px 5px);background-size:1px 5px"></div>
<div style="position:absolute;left:954px;top:346px;width:1px;height:23px;background-image:linear-gradient(to bottom,#c4c4c4 0 3px,transparent 3px 5px);background-size:1px 5px"></div>
<div style="position:absolute;left:1134px;top:346px;width:1px;height:23px;background-image:linear-gradient(to bottom,#c4c4c4 0 3px,transparent 3px 5px);background-size:1px 5px"></div>
<div style="position:absolute;left:1224px;top:346px;width:1px;height:23px;background-image:linear-gradient(to bottom,#c4c4c4 0 3px,transparent 3px 5px);background-size:1px 5px"></div>
<div style="position:absolute;left:1404px;top:346px;width:1px;height:23px;background-image:linear-gradient(to bottom,#c4c4c4 0 3px,transparent 3px 5px);background-size:1px 5px"></div>
<div style="position:absolute;left:1494px;top:346px;width:1px;height:23px;background-image:linear-gradient(to bottom,#c4c4c4 0 3px,transparent 3px 5px);background-size:1px 5px"></div>
<div style="position:absolute;left:1748px;top:346px;width:1px;height:23px;background-image:linear-gradient(to bottom,#c4c4c4 0 3px,transparent 3px 5px);background-size:1px 5px"></div>
<div style="position:absolute;left:1827px;top:346px;width:1px;height:23px;background-image:linear-gradient(to bottom,#c4c4c4 0 3px,transparent 3px 5px);background-size:1px 5px"></div>
<div style="position:absolute;left:1907px;top:346px;width:1px;height:23px;background-image:linear-gradient(to bottom,#c4c4c4 0 3px,transparent 3px 5px);background-size:1px 5px"></div>
<div style="position:absolute;left:767px;top:368px;width:1141px;height:1px;background-image:linear-gradient(to right,#c4c4c4 0 3px,transparent 3px 5px);background-size:5px 1px"></div>
<div style="position:absolute;left:1670.5px;top:344px;width:79px;height:23px;line-height:23px;text-align:center;white-space:nowrap;overflow:hidden;font-family:'Liberation Sans',sans-serif;color:#222;font-size:11.5px">103 040</div>
<div style="position:absolute;left:1749.5px;top:344px;width:79px;height:23px;line-height:23px;text-align:center;white-space:nowrap;overflow:hidden;font-family:'Liberation Sans',sans-serif;color:#222;font-size:11.5px">103 040</div>
<div style="position:absolute;left:1828.5px;top:344px;width:79px;height:23px;line-height:23px;text-align:center;white-space:nowrap;overflow:hidden;font-family:'Liberation Sans',sans-serif;color:#222;font-size:11.5px">103 040</div>
<div style="position:absolute;left:767px;top:369px;width:1141px;height:23px;background:#fff"></div>
<div style="position:absolute;left:1669px;top:369px;width:238px;height:23px;background:#f3f3f5"></div>
<div style="position:absolute;left:774px;top:369px;width:1px;height:23px;background:#c3c3ca"></div>
<div style="position:absolute;left:1044px;top:369px;width:1px;height:23px;background:#c3c3ca"></div>
<div style="position:absolute;left:1314px;top:369px;width:1px;height:23px;background:#c3c3ca"></div>
<div style="position:absolute;left:1584px;top:369px;width:1px;height:23px;background:#c3c3ca"></div>
<div style="position:absolute;left:1669px;top:369px;width:1px;height:23px;background:#c3c3ca"></div>
<div style="position:absolute;left:864px;top:369px;width:1px;height:23px;background-image:linear-gradient(to bottom,#c4c4c4 0 3px,transparent 3px 5px);background-size:1px 5px"></div>
<div style="position:absolute;left:954px;top:369px;width:1px;height:23px;background-image:linear-gradient(to bottom,#c4c4c4 0 3px,transparent 3px 5px);background-size:1px 5px"></div>
<div style="position:absolute;left:1134px;top:369px;width:1px;height:23px;background-image:linear-gradient(to bottom,#c4c4c4 0 3px,transparent 3px 5px);background-size:1px 5px"></div>
<div style="position:absolute;left:1224px;top:369px;width:1px;height:23px;background-image:linear-gradient(to bottom,#c4c4c4 0 3px,transparent 3px 5px);background-size:1px 5px"></div>
<div style="position:absolute;left:1404px;top:369px;width:1px;height:23px;background-image:linear-gradient(to bottom,#c4c4c4 0 3px,transparent 3px 5px);background-size:1px 5px"></div>
<div style="position:absolute;left:1494px;top:369px;width:1px;height:23px;background-image:linear-gradient(to bottom,#c4c4c4 0 3px,transparent 3px 5px);background-size:1px 5px"></div>
<div style="position:absolute;left:1748px;top:369px;width:1px;height:23px;background-image:linear-gradient(to bottom,#c4c4c4 0 3px,transparent 3px 5px);background-size:1px 5px"></div>
<div style="position:absolute;left:1827px;top:369px;width:1px;height:23px;background-image:linear-gradient(to bottom,#c4c4c4 0 3px,transparent 3px 5px);background-size:1px 5px"></div>
<div style="position:absolute;left:1907px;top:369px;width:1px;height:23px;background-image:linear-gradient(to bottom,#c4c4c4 0 3px,transparent 3px 5px);background-size:1px 5px"></div>
<div style="position:absolute;left:767px;top:391px;width:1141px;height:1px;background-image:linear-gradient(to right,#c4c4c4 0 3px,transparent 3px 5px);background-size:5px 1px"></div>
<div style="position:absolute;left:1670.5px;top:367px;width:79px;height:23px;line-height:23px;text-align:center;white-space:nowrap;overflow:hidden;font-family:'Liberation Sans',sans-serif;color:#222;font-size:11.5px">103 040</div>
<div style="position:absolute;left:1749.5px;top:367px;width:79px;height:23px;line-height:23px;text-align:center;white-space:nowrap;overflow:hidden;font-family:'Liberation Sans',sans-serif;color:#222;font-size:11.5px">103 040</div>
<div style="position:absolute;left:1828.5px;top:367px;width:79px;height:23px;line-height:23px;text-align:center;white-space:nowrap;overflow:hidden;font-family:'Liberation Sans',sans-serif;color:#222;font-size:11.5px">103 040</div>
<div style="position:absolute;left:767px;top:392px;width:1141px;height:23px;background:#fff"></div>
<div style="position:absolute;left:1669px;top:392px;width:238px;height:23px;background:#f3f3f5"></div>
<div style="position:absolute;left:774px;top:392px;width:1px;height:23px;background:#c3c3ca"></div>
<div style="position:absolute;left:1044px;top:392px;width:1px;height:23px;background:#c3c3ca"></div>
<div style="position:absolute;left:1314px;top:392px;width:1px;height:23px;background:#c3c3ca"></div>
<div style="position:absolute;left:1584px;top:392px;width:1px;height:23px;background:#c3c3ca"></div>
<div style="position:absolute;left:1669px;top:392px;width:1px;height:23px;background:#c3c3ca"></div>
<div style="position:absolute;left:864px;top:392px;width:1px;height:23px;background-image:linear-gradient(to bottom,#c4c4c4 0 3px,transparent 3px 5px);background-size:1px 5px"></div>
<div style="position:absolute;left:954px;top:392px;width:1px;height:23px;background-image:linear-gradient(to bottom,#c4c4c4 0 3px,transparent 3px 5px);background-size:1px 5px"></div>
<div style="position:absolute;left:1134px;top:392px;width:1px;height:23px;background-image:linear-gradient(to bottom,#c4c4c4 0 3px,transparent 3px 5px);background-size:1px 5px"></div>
<div style="position:absolute;left:1224px;top:392px;width:1px;height:23px;background-image:linear-gradient(to bottom,#c4c4c4 0 3px,transparent 3px 5px);background-size:1px 5px"></div>
<div style="position:absolute;left:1404px;top:392px;width:1px;height:23px;background-image:linear-gradient(to bottom,#c4c4c4 0 3px,transparent 3px 5px);background-size:1px 5px"></div>
<div style="position:absolute;left:1494px;top:392px;width:1px;height:23px;background-image:linear-gradient(to bottom,#c4c4c4 0 3px,transparent 3px 5px);background-size:1px 5px"></div>
<div style="position:absolute;left:1748px;top:392px;width:1px;height:23px;background-image:linear-gradient(to bottom,#c4c4c4 0 3px,transparent 3px 5px);background-size:1px 5px"></div>
<div style="position:absolute;left:1827px;top:392px;width:1px;height:23px;background-image:linear-gradient(to bottom,#c4c4c4 0 3px,transparent 3px 5px);background-size:1px 5px"></div>
<div style="position:absolute;left:1907px;top:392px;width:1px;height:23px;background-image:linear-gradient(to bottom,#c4c4c4 0 3px,transparent 3px 5px);background-size:1px 5px"></div>
<div style="position:absolute;left:767px;top:414px;width:1141px;height:1px;background-image:linear-gradient(to right,#c4c4c4 0 3px,transparent 3px 5px);background-size:5px 1px"></div>
<div style="position:absolute;left:1670.5px;top:390px;width:79px;height:23px;line-height:23px;text-align:center;white-space:nowrap;overflow:hidden;font-family:'Liberation Sans',sans-serif;color:#222;font-size:11.5px">103 040</div>
<div style="position:absolute;left:1749.5px;top:390px;width:79px;height:23px;line-height:23px;text-align:center;white-space:nowrap;overflow:hidden;font-family:'Liberation Sans',sans-serif;color:#222;font-size:11.5px">103 040</div>
<div style="position:absolute;left:1828.5px;top:390px;width:79px;height:23px;line-height:23px;text-align:center;white-space:nowrap;overflow:hidden;font-family:'Liberation Sans',sans-serif;color:#222;font-size:11.5px">103 040</div>
<div style="position:absolute;left:767px;top:415px;width:1141px;height:23px;background:#fff"></div>
<div style="position:absolute;left:1669px;top:415px;width:238px;height:23px;background:#f3f3f5"></div>
<div style="position:absolute;left:774px;top:415px;width:1px;height:23px;background:#c3c3ca"></div>
<div style="position:absolute;left:1044px;top:415px;width:1px;height:23px;background:#c3c3ca"></div>
<div style="position:absolute;left:1314px;top:415px;width:1px;height:23px;background:#c3c3ca"></div>
<div style="position:absolute;left:1584px;top:415px;width:1px;height:23px;background:#c3c3ca"></div>
<div style="position:absolute;left:1669px;top:415px;width:1px;height:23px;background:#c3c3ca"></div>
<div style="position:absolute;left:864px;top:415px;width:1px;height:23px;background-image:linear-gradient(to bottom,#c4c4c4 0 3px,transparent 3px 5px);background-size:1px 5px"></div>
<div style="position:absolute;left:954px;top:415px;width:1px;height:23px;background-image:linear-gradient(to bottom,#c4c4c4 0 3px,transparent 3px 5px);background-size:1px 5px"></div>
<div style="position:absolute;left:1134px;top:415px;width:1px;height:23px;background-image:linear-gradient(to bottom,#c4c4c4 0 3px,transparent 3px 5px);background-size:1px 5px"></div>
<div style="position:absolute;left:1224px;top:415px;width:1px;height:23px;background-image:linear-gradient(to bottom,#c4c4c4 0 3px,transparent 3px 5px);background-size:1px 5px"></div>
<div style="position:absolute;left:1404px;top:415px;width:1px;height:23px;background-image:linear-gradient(to bottom,#c4c4c4 0 3px,transparent 3px 5px);background-size:1px 5px"></div>
<div style="position:absolute;left:1494px;top:415px;width:1px;height:23px;background-image:linear-gradient(to bottom,#c4c4c4 0 3px,transparent 3px 5px);background-size:1px 5px"></div>
<div style="position:absolute;left:1748px;top:415px;width:1px;height:23px;background-image:linear-gradient(to bottom,#c4c4c4 0 3px,transparent 3px 5px);background-size:1px 5px"></div>
<div style="position:absolute;left:1827px;top:415px;width:1px;height:23px;background-image:linear-gradient(to bottom,#c4c4c4 0 3px,transparent 3px 5px);background-size:1px 5px"></div>
<div style="position:absolute;left:1907px;top:415px;width:1px;height:23px;background-image:linear-gradient(to bottom,#c4c4c4 0 3px,transparent 3px 5px);background-size:1px 5px"></div>
<div style="position:absolute;left:767px;top:437px;width:1141px;height:1px;background-image:linear-gradient(to right,#c4c4c4 0 3px,transparent 3px 5px);background-size:5px 1px"></div>
<div style="position:absolute;left:1670.5px;top:413px;width:79px;height:23px;line-height:23px;text-align:center;white-space:nowrap;overflow:hidden;font-family:'Liberation Sans',sans-serif;color:#222;font-size:11.5px">476 300</div>
<div style="position:absolute;left:1749.5px;top:413px;width:79px;height:23px;line-height:23px;text-align:center;white-space:nowrap;overflow:hidden;font-family:'Liberation Sans',sans-serif;color:#222;font-size:11.5px">476 300</div>
<div style="position:absolute;left:1828.5px;top:413px;width:79px;height:23px;line-height:23px;text-align:center;white-space:nowrap;overflow:hidden;font-family:'Liberation Sans',sans-serif;color:#222;font-size:11.5px">476 300</div>
<div style="position:absolute;left:767px;top:438px;width:1141px;height:23px;background:#2a69b8"></div>
<div style="position:absolute;left:774px;top:436px;width:90px;height:23px;line-height:23px;text-align:center;white-space:nowrap;overflow:hidden;font-family:'Liberation Sans',sans-serif;color:#fff;font-size:11.5px">61 829.8</div>
<div style="position:absolute;left:864px;top:436px;width:90px;height:23px;line-height:23px;text-align:center;white-space:nowrap;overflow:hidden;font-family:'Liberation Sans',sans-serif;color:#fff;font-size:11.5px">61 829.8</div>
<div style="position:absolute;left:954px;top:436px;width:90px;height:23px;line-height:23px;text-align:center;white-space:nowrap;overflow:hidden;font-family:'Liberation Sans',sans-serif;color:#2bb24c;font-size:11.5px">61 829.8</div>
<div style="position:absolute;left:1044px;top:436px;width:90px;height:23px;line-height:23px;text-align:center;white-space:nowrap;overflow:hidden;font-family:'Liberation Sans',sans-serif;color:#fff;font-size:11.5px">61 839.87</div>
<div style="position:absolute;left:1134px;top:436px;width:90px;height:23px;line-height:23px;text-align:center;white-space:nowrap;overflow:hidden;font-family:'Liberation Sans',sans-serif;color:#fff;font-size:11.5px">61 839.87</div>
<div style="position:absolute;left:1224px;top:436px;width:90px;height:23px;line-height:23px;text-align:center;white-space:nowrap;overflow:hidden;font-family:'Liberation Sans',sans-serif;color:#2bb24c;font-size:11.5px">61 839.87</div>
<div style="position:absolute;left:1670.5px;top:436px;width:79px;height:23px;line-height:23px;text-align:center;white-space:nowrap;overflow:hidden;font-family:'Liberation Sans',sans-serif;color:#fff;font-size:11.5px">645 425</div>
<div style="position:absolute;left:1749.5px;top:436px;width:79px;height:23px;line-height:23px;text-align:center;white-space:nowrap;overflow:hidden;font-family:'Liberation Sans',sans-serif;color:#fff;font-size:11.5px">645 425</div>
<div style="position:absolute;left:1828.5px;top:436px;width:79px;height:23px;line-height:23px;text-align:center;white-space:nowrap;overflow:hidden;font-family:'Liberation Sans',sans-serif;color:#fff;font-size:11.5px">645 425</div>
<div style="position:absolute;left:1669px;top:139px;width:1px;height:322px;background:#9aa4b4"></div>
<div style="position:absolute;left:1908px;top:89px;width:10px;height:372px;background:#f4f4f6"></div>
<div style="position:absolute;left:1908px;top:91px;width:10px;height:28px;background:#d8d8dc;border-radius:5px"></div>
<div style="position:absolute;left:767px;top:461px;width:1151px;height:13px;background:#f0f0f3"></div>
<div style="position:absolute;left:1057px;top:462px;width:21px;height:11px;background:#dadade;border-radius:5px"></div>
<div style="position:absolute;left:45px;top:474px;width:1873px;height:5px;background:#a9a9b0"></div>
<div style="position:absolute;left:45px;top:479px;width:1873px;height:52px;background:#fff"></div>
<div style="position:absolute;left:45px;top:531px;width:1873px;height:1px;background:#d0d0d4"></div>
<div style="position:absolute;left:8px;top:489px;width:300px;height:26px;line-height:26px;text-align:center;white-space:nowrap;overflow:hidden;font-family:'Liberation Sans',sans-serif;color:#3c3c40;font-size:17.3px">Карточка работы</div>
<div style="position:absolute;left:223px;top:489px;width:300px;height:26px;line-height:26px;text-align:center;white-space:nowrap;overflow:hidden;font-family:'Liberation Sans',sans-serif;color:#3c3c40;font-size:17.3px">Связи работы</div>
<div style="position:absolute;left:450px;top:489px;width:300px;height:26px;line-height:26px;text-align:center;white-space:nowrap;overflow:hidden;font-family:'Liberation Sans',sans-serif;color:#3c3c40;font-size:17.3px">Связанные графики</div>
<div style="position:absolute;left:674px;top:489px;width:300px;height:26px;line-height:26px;text-align:center;white-space:nowrap;overflow:hidden;font-family:'Liberation Sans',sans-serif;color:#3c3c40;font-size:17.3px">Справочники</div>
<div style="position:absolute;left:921px;top:489px;width:300px;height:26px;line-height:26px;text-align:center;white-space:nowrap;overflow:hidden;font-family:'Liberation Sans',sans-serif;color:#1f78d8;font-size:17.3px">Ресурсное планирование</div>
<div style="position:absolute;left:1155px;top:489px;width:300px;height:26px;line-height:26px;text-align:center;white-space:nowrap;overflow:hidden;font-family:'Liberation Sans',sans-serif;color:#3c3c40;font-size:17.3px">Чек-листы</div>
<div style="position:absolute;left:1374px;top:489px;width:300px;height:26px;line-height:26px;text-align:center;white-space:nowrap;overflow:hidden;font-family:'Liberation Sans',sans-serif;color:#3c3c40;font-size:17.3px">Фото / Документация</div>
<div style="position:absolute;left:1639px;top:489px;width:300px;height:26px;line-height:26px;text-align:center;white-space:nowrap;overflow:hidden;font-family:'Liberation Sans',sans-serif;color:#3c3c40;font-size:17.3px">Запросы и поручения</div>
<div style="position:absolute;left:923px;top:521px;width:296px;height:3px;background:#1f78d8"></div>
<div style="position:absolute;left:45px;top:532px;width:1873px;height:43px;background:#f0f0f3"></div>
<div style="position:absolute;left:45px;top:575px;width:1873px;height:1px;background:#c3c3ca"></div>
<div style="position:absolute;left:493px;top:533px;width:43px;height:43px;background:#dddde1;border-radius:3px 3px 0 0"></div>
<div style="color:#48484c"><svg style="position:absolute;left:55.0px;top:543.0px;" width="24" height="24" viewBox="0 0 24 24" fill="none" stroke="currentColor" stroke-width="2" stroke-linecap="round" stroke-linejoin="round"><path d="M12 1.5v21M1.5 12h21"/></svg></div>
<div style="color:#c4c4c8"><svg style="position:absolute;left:103.0px;top:543.0px;" width="24" height="24" viewBox="0 0 24 24" fill="none" stroke="currentColor" stroke-width="2" stroke-linecap="round" stroke-linejoin="round"><path d="M2 7.5h20M17 2.5l5 5M22 16.5H2M7 21.5l-5-5"/></svg></div>
<div style="color:#c4c4c8"><svg style="position:absolute;left:151.0px;top:543.0px;" width="24" height="24" viewBox="0 0 24 24" fill="none" stroke="currentColor" stroke-width="2" stroke-linecap="round" stroke-linejoin="round"><path d="M1.5 4.5h21"/><path d="M8 3.5c0-1.5 1-2 4-2s4 .5 4 2" fill="currentColor"/><path d="M4.5 5v15.5a2 2 0 0 0 2 2h11a2 2 0 0 0 2-2V5"/></svg></div>
<div style="color:#48484c"><svg style="position:absolute;left:204.0px;top:543.0px;" width="24" height="24" viewBox="0 0 24 24" fill="none" stroke="currentColor" stroke-width="2" stroke-linecap="round" stroke-linejoin="round"><path d="M1.5 12C4 7.5 8 5 12 5s8 2.5 10.5 7C20 16.5 16 19 12 19s-8-2.5-10.5-7z"/><circle cx="12" cy="12" r="2.6"/></svg></div>
<div style="color:#48484c"><svg style="position:absolute;left:250.0px;top:543.0px;" width="24" height="24" viewBox="0 0 24 24" fill="none" stroke="currentColor" stroke-width="2" stroke-linecap="round" stroke-linejoin="round"><path d="M3.2 3h15.6a1.6 1.6 0 0 1 1.2 2.7L14 12.5v7.8a1.8 1.8 0 0 1-2.8 1.5l-.6-.4A2 2 0 0 1 9.5 19.7v-7.2L2 5.7A1.6 1.6 0 0 1 3.2 3z"/><path d="M17.5 20.5h5.5l-2.75 3z" fill="currentColor" stroke="none"/></svg></div>
<div style="color:#48484c"><svg style="position:absolute;left:305.0px;top:543.0px;" width="24" height="24" viewBox="0 0 24 24" fill="none" stroke="currentColor" stroke-width="2" stroke-linecap="round" stroke-linejoin="round"><path d="M18 10h-3.5V6.5l3.8-3.8a6.5 6.5 0 0 0-8.7 8.7l-7 7a2.3 2.3 0 0 0 3.3 3.3l7-7a6.5 6.5 0 0 0 8.7-8.7z"/><path d="M17.5 20.5h5.5l-2.75 3z" fill="currentColor" stroke="none"/></svg></div>
<div style="color:#48484c"><svg style="position:absolute;left:354.0px;top:543.0px;" width="24" height="24" viewBox="0 0 24 24" fill="none" stroke="currentColor" stroke-width="2" stroke-linecap="round" stroke-linejoin="round"><rect x="2" y="3.5" width="20" height="19" rx="3"/><path d="M2 8.5h20M7 1.5v3.5M17 1.5v3.5"/><path d="M7 9v13M12 9v13M17 9v13"/></svg></div>
<div style="color:#c4c4c8"><svg style="position:absolute;left:406.0px;top:543.0px;" width="24" height="24" viewBox="0 0 24 24" fill="none" stroke="currentColor" stroke-width="2" stroke-linecap="round" stroke-linejoin="round"><rect x="2" y="3.5" width="20" height="19" rx="3"/><path d="M2 8.5h20M7 1.5v3.5M17 1.5v3.5"/><path d="M6.5 8.5v14"/><path d="M16.5 10.5v9.5L10.5 15.25z" fill="currentColor" stroke="none"/></svg></div>
<div style="color:#c4c4c8"><svg style="position:absolute;left:454.0px;top:543.0px;" width="24" height="24" viewBox="0 0 24 24" fill="none" stroke="currentColor" stroke-width="2" stroke-linecap="round" stroke-linejoin="round"><rect x="2" y="3.5" width="20" height="19" rx="3"/><path d="M2 8.5h20M7 1.5v3.5M17 1.5v3.5"/><path d="M6.5 8.5v14"/><path d="M10.5 10.5v9.5l6-4.75z" fill="currentColor" stroke="none"/></svg></div>
<div style="color:#48484c"><svg style="position:absolute;left:502.0px;top:543.0px;" width="24" height="24" viewBox="0 0 24 24" fill="none" stroke="currentColor" stroke-width="2" stroke-linecap="round" stroke-linejoin="round"><rect x="2" y="3.5" width="20" height="19" rx="3"/><path d="M2 8.5h20M7 1.5v3.5M17 1.5v3.5"/><path d="M15 12h-4.5a1.5 1.5 0 0 0 0 3.2h3a1.6 1.6 0 0 1 0 3.3H9" stroke-width="2"/></svg></div>
<div style="color:#48484c"><svg style="position:absolute;left:550.0px;top:543.0px;" width="24" height="24" viewBox="0 0 24 24" fill="none" stroke="currentColor" stroke-width="2" stroke-linecap="round" stroke-linejoin="round"><rect x="2" y="3.5" width="20" height="19" rx="3"/><path d="M2 8.5h20M7 1.5v3.5M17 1.5v3.5"/><path d="M9.5 11.5v8h2.5a4 4 0 0 0 0-8z" stroke-width="2"/></svg></div>
<div style="color:#48484c"><svg style="position:absolute;left:598.0px;top:543.0px;" width="24" height="24" viewBox="0 0 24 24" fill="none" stroke="currentColor" stroke-width="2" stroke-linecap="round" stroke-linejoin="round"><rect x="2" y="3.5" width="20" height="19" rx="3"/><path d="M2 8.5h20M7 1.5v3.5M17 1.5v3.5"/><path d="M10 19.5v-8h5.5M10 15.5h4.5" stroke-width="2"/></svg></div>
<div style="color:#48484c"><svg style="position:absolute;left:651.0px;top:543.0px;" width="24" height="24" viewBox="0 0 24 24" fill="none" stroke="currentColor" stroke-width="2" stroke-linecap="round" stroke-linejoin="round"><circle cx="12" cy="12" r="10.5"/><path d="M6 12.5l2.5 2.5 5-5.5M11 14.5l.5.5 5-5.5"/></svg></div>
<div style="color:#c4c4c8"><svg style="position:absolute;left:699.0px;top:543.0px;" width="24" height="24" viewBox="0 0 24 24" fill="none" stroke="currentColor" stroke-width="2" stroke-linecap="round" stroke-linejoin="round"><circle cx="12" cy="12" r="10.5"/><path d="M7.5 12.5l3 3 6-6"/></svg></div>
<div style="color:#c4c4c8"><svg style="position:absolute;left:747.0px;top:543.0px;" width="24" height="24" viewBox="0 0 24 24" fill="none" stroke="currentColor" stroke-width="2" stroke-linecap="round" stroke-linejoin="round"><circle cx="12" cy="12" r="10.5"/><path d="M8 8l8 8M16 8l-8 8"/></svg></div>
<div style="position:absolute;left:190px;top:532px;width:1px;height:43px;background:#c3c3ca"></div>
<div style="position:absolute;left:291px;top:532px;width:1px;height:43px;background:#c3c3ca"></div>
<div style="position:absolute;left:391px;top:532px;width:1px;height:43px;background:#c3c3ca"></div>
<div style="position:absolute;left:637px;top:532px;width:1px;height:43px;background:#c3c3ca"></div>
<div style="color:#48484c"><svg style="position:absolute;left:1888.0px;top:543.0px;" width="24" height="24" viewBox="0 0 24 24" fill="none" stroke="currentColor" stroke-width="2" stroke-linecap="round" stroke-linejoin="round"><rect x="1.5" y="1.5" width="21" height="21" rx="2.5"/><path d="M16 1.5v21"/></svg></div>
<div style="position:absolute;left:45px;top:576px;width:1873px;height:25px;background:#f0f0f3"></div>
<div style="position:absolute;left:53px;top:577px;width:900px;height:25px;line-height:25px;text-align:left;white-space:nowrap;overflow:hidden;font-family:'Liberation Sans',sans-serif;color:#222;font-size:14.8px">01.03 Устройство песчаного основания. Сроки 10.10.2025 - 13.10.2025. Прогресс: 100%.</div>
<div style="position:absolute;left:45px;top:601px;width:1873px;height:23px;background:#f0f0f3"></div>
<div style="position:absolute;left:45px;top:624px;width:1873px;height:270px;background:#fff"></div>
<div style="position:absolute;left:46px;top:602px;width:180px;height:23px;line-height:23px;text-align:center;white-space:nowrap;overflow:hidden;font-family:'Liberation Sans',sans-serif;color:#111;font-weight:bold;font-size:12px;letter-spacing:-0.1px">Наименование</div>
<div style="position:absolute;left:227px;top:602px;width:63px;height:23px;line-height:23px;text-align:center;white-space:nowrap;overflow:hidden;font-family:'Liberation Sans',sans-serif;color:#111;font-weight:bold;font-size:12px;letter-spacing:-0.1px">Ед. изм...</div>
<div style="position:absolute;left:291px;top:602px;width:78px;height:23px;line-height:23px;text-align:center;white-space:nowrap;overflow:hidden;font-family:'Liberation Sans',sans-serif;color:#111;font-weight:bold;font-size:12px;letter-spacing:-0.1px">Плановое...</div>
<div style="position:absolute;left:370px;top:602px;width:75px;height:23px;line-height:23px;text-align:center;white-space:nowrap;overflow:hidden;font-family:'Liberation Sans',sans-serif;color:#111;font-weight:bold;font-size:12px;letter-spacing:-0.1px">Фактичес...</div>
<div style="position:absolute;left:446px;top:602px;width:79px;height:23px;line-height:23px;text-align:center;white-space:nowrap;overflow:hidden;font-family:'Liberation Sans',sans-serif;color:#111;font-weight:bold;font-size:12px;letter-spacing:-0.1px">Остаток</div>
<div style="position:absolute;left:526px;top:602px;width:113px;height:23px;line-height:23px;text-align:center;white-space:nowrap;overflow:hidden;font-family:'Liberation Sans',sans-serif;color:#111;font-weight:bold;font-size:12px;letter-spacing:-0.1px">Нераспределен...</div>
<div style="position:absolute;left:640px;top:602px;width:99px;height:23px;line-height:23px;text-align:center;white-space:nowrap;overflow:hidden;font-family:'Liberation Sans',sans-serif;color:#111;font-weight:bold;font-size:12px;letter-spacing:-0.1px">Долг</div>
<div style="position:absolute;left:740px;top:602px;width:109px;height:23px;line-height:23px;text-align:center;white-space:nowrap;overflow:hidden;font-family:'Liberation Sans',sans-serif;color:#111;font-weight:bold;font-size:12px;letter-spacing:-0.1px">Распределение</div>
<div style="position:absolute;left:850px;top:602px;width:64px;height:23px;line-height:23px;text-align:center;white-space:nowrap;overflow:hidden;font-family:'Liberation Sans',sans-serif;color:#111;font-weight:bold;font-size:12px;letter-spacing:-0.1px">КОРР</div>
<div style="position:absolute;left:915px;top:602px;width:75px;height:23px;line-height:23px;text-align:center;white-space:nowrap;overflow:hidden;font-family:'Liberation Sans',sans-serif;color:#111;font-weight:bold;font-size:12px;letter-spacing:-0.1px">Ставка</div>
<div style="position:absolute;left:991px;top:602px;width:85px;height:23px;line-height:23px;text-align:center;white-space:nowrap;overflow:hidden;font-family:'Liberation Sans',sans-serif;color:#111;font-weight:bold;font-size:12px;letter-spacing:-0.1px">Шифр</div>
<div style="position:absolute;left:1077px;top:602px;width:99px;height:23px;line-height:23px;text-align:center;white-space:nowrap;overflow:hidden;font-family:'Liberation Sans',sans-serif;color:#111;font-weight:bold;font-size:12px;letter-spacing:-0.1px">Код ресурса</div>
<div style="position:absolute;left:1177px;top:602px;width:139px;height:23px;line-height:23px;text-align:center;white-space:nowrap;overflow:hidden;font-family:'Liberation Sans',sans-serif;color:#111;font-weight:bold;font-size:12px;letter-spacing:-0.1px">Наименование СДР</div>
<div style="position:absolute;left:1317px;top:602px;width:99px;height:23px;line-height:23px;text-align:center;white-space:nowrap;overflow:hidden;font-family:'Liberation Sans',sans-serif;color:#111;font-weight:bold;font-size:12px;letter-spacing:-0.1px">Тип ресурса</div>
<div style="position:absolute;left:1417px;top:602px;width:99px;height:23px;line-height:23px;text-align:center;white-space:nowrap;overflow:hidden;font-family:'Liberation Sans',sans-serif;color:#111;font-weight:bold;font-size:12px;letter-spacing:-0.1px">Интенсивность</div>
<div style="position:absolute;left:1517px;top:602px;width:80px;height:23px;line-height:23px;text-align:center;white-space:nowrap;overflow:hidden;font-family:'Liberation Sans',sans-serif;color:#111;font-weight:bold;font-size:12px;letter-spacing:-0.1px">Уд. трудоз...</div>
<div style="position:absolute;left:1598px;top:602px;width:127px;height:23px;line-height:23px;text-align:center;white-space:nowrap;overflow:hidden;font-family:'Liberation Sans',sans-serif;color:#111;font-weight:bold;font-size:12px;letter-spacing:-0.1px">Управляющий рес...</div>
<div style="position:absolute;left:1726px;top:602px;width:99px;height:23px;line-height:23px;text-align:center;white-space:nowrap;overflow:hidden;font-family:'Liberation Sans',sans-serif;color:#111;font-weight:bold;font-size:12px;letter-spacing:-0.1px">Справочник</div>
<div style="position:absolute;left:1826px;top:602px;width:104px;height:23px;line-height:23px;text-align:center;white-space:nowrap;overflow:hidden;font-family:'Liberation Sans',sans-serif;color:#111;font-weight:bold;font-size:12px;letter-spacing:-0.1px">Календарь</div>
<div style="position:absolute;left:45px;top:601px;width:1873px;height:1px;background:#d0d0d4"></div>
<div style="position:absolute;left:45px;top:624px;width:1873px;height:1px;background:#d0d0d4"></div>
<div style="color:#555"><svg style="position:absolute;left:50.0px;top:629.0px;" width="20" height="20" viewBox="0 0 24 24" fill="none" stroke="currentColor" stroke-width="1.6" stroke-linecap="round" stroke-linejoin="round"><circle cx="12" cy="12" r="10.2" stroke-width="1.4"/><g stroke-width="1.2"><path d="M8.8 6.2v3.6c0 .8 1.4 1.4 3.2 1.4s3.2-.6 3.2-1.4V6.2" fill="#fff"/><ellipse cx="12" cy="6.2" rx="3.2" ry="1.4" fill="#fff"/><path d="M8.8 8.0c0 .8 1.4 1.4 3.2 1.4s3.2-.6 3.2-1.4"/><path d="M5.1000000000000005 12v3.6c0 .8 1.4 1.4 3.2 1.4s3.2-.6 3.2-1.4V12" fill="#fff"/><ellipse cx="8.3" cy="12" rx="3.2" ry="1.4" fill="#fff"/><path d="M5.1000000000000005 13.8c0 .8 1.4 1.4 3.2 1.4s3.2-.6 3.2-1.4"/><path d="M12.5 12v3.6c0 .8 1.4 1.4 3.2 1.4s3.2-.6 3.2-1.4V12" fill="#fff"/><ellipse cx="15.7" cy="12" rx="3.2" ry="1.4" fill="#fff"/><path d="M12.5 13.8c0 .8 1.4 1.4 3.2 1.4s3.2-.6 3.2-1.4"/></g></svg></div>
<div style="position:absolute;left:78px;top:625px;width:148px;height:30px;line-height:30px;text-align:left;white-space:nowrap;overflow:hidden;font-family:'Liberation Sans',sans-serif;color:#222;font-size:13.7px">Стоимость по ресур...</div>
<div style="position:absolute;left:291px;top:625.5px;width:79px;height:30px;line-height:30px;text-align:center;white-space:nowrap;overflow:hidden;font-family:'Liberation Sans',sans-serif;color:#222;font-size:13.5px">56 980</div>
<div style="position:absolute;left:370px;top:625.5px;width:76px;height:30px;line-height:30px;text-align:center;white-space:nowrap;overflow:hidden;font-family:'Liberation Sans',sans-serif;color:#222;font-size:13.5px">71 225</div>
<div style="position:absolute;left:446px;top:625.5px;width:80px;height:30px;line-height:30px;text-align:center;white-space:nowrap;overflow:hidden;font-family:'Liberation Sans',sans-serif;color:#222;font-size:13.5px">14 245</div>
<div style="position:absolute;left:526px;top:625.5px;width:114px;height:30px;line-height:30px;text-align:center;white-space:nowrap;overflow:hidden;font-family:'Liberation Sans',sans-serif;color:#222;font-size:13.5px">-14 245</div>
<div style="position:absolute;left:640px;top:625.5px;width:100px;height:30px;line-height:30px;text-align:center;white-space:nowrap;overflow:hidden;font-family:'Liberation Sans',sans-serif;color:#222;font-size:13.5px">28 490</div>
<div style="position:absolute;left:1653px;top:632px;width:16px;height:16px;border:1.5px solid #e2e2e6;border-radius:2px;box-sizing:border-box;background:#fff"></div>
<div style="position:absolute;left:45px;top:654px;width:1873px;height:1px;background:#d0d0d4"></div>
<div style="color:#555"><svg style="position:absolute;left:50.0px;top:659.0px;" width="20" height="20" viewBox="0 0 24 24" fill="none" stroke="currentColor" stroke-width="1.6" stroke-linecap="round" stroke-linejoin="round"><circle cx="12" cy="12" r="10.2" stroke-width="1.4"/><circle cx="12" cy="8.2" r="2.6" fill="currentColor" stroke="none"/><path d="M6.5 16.5c0-2.5 2-4.2 5.5-4.2s5.5 1.7 5.5 4.2v.8a.8.8 0 0 1-.8.8H7.3a.8.8 0 0 1-.8-.8z" fill="currentColor" stroke="none"/></svg></div>
<div style="position:absolute;left:78px;top:655px;width:148px;height:30px;line-height:30px;text-align:left;white-space:nowrap;overflow:hidden;font-family:'Liberation Sans',sans-serif;color:#222;font-size:13.7px">Трудозатраты по рес...</div>
<div style="position:absolute;left:291px;top:655.5px;width:79px;height:30px;line-height:30px;text-align:center;white-space:nowrap;overflow:hidden;font-family:'Liberation Sans',sans-serif;color:#222;font-size:13.5px">9.62</div>
<div style="position:absolute;left:370px;top:655.5px;width:76px;height:30px;line-height:30px;text-align:center;white-space:nowrap;overflow:hidden;font-family:'Liberation Sans',sans-serif;color:#222;font-size:13.5px">12.025</div>
<div style="position:absolute;left:446px;top:655.5px;width:80px;height:30px;line-height:30px;text-align:center;white-space:nowrap;overflow:hidden;font-family:'Liberation Sans',sans-serif;color:#222;font-size:13.5px">2.405</div>
<div style="position:absolute;left:526px;top:655.5px;width:114px;height:30px;line-height:30px;text-align:center;white-space:nowrap;overflow:hidden;font-family:'Liberation Sans',sans-serif;color:#222;font-size:13.5px">-2.405</div>
<div style="position:absolute;left:640px;top:655.5px;width:100px;height:30px;line-height:30px;text-align:center;white-space:nowrap;overflow:hidden;font-family:'Liberation Sans',sans-serif;color:#222;font-size:13.5px">4.81</div>
<div style="position:absolute;left:1653px;top:662px;width:16px;height:16px;border:1.5px solid #e2e2e6;border-radius:2px;box-sizing:border-box;background:#fff"></div>
<div style="position:absolute;left:45px;top:684px;width:1873px;height:1px;background:#d0d0d4"></div>
<div style="color:#555"><svg style="position:absolute;left:50.0px;top:689.0px;" width="20" height="20" viewBox="0 0 24 24" fill="none" stroke="currentColor" stroke-width="1.6" stroke-linecap="round" stroke-linejoin="round"><circle cx="12" cy="12" r="10" stroke-width="1.9"/><path d="M2.5 12.3c3 0 5.2-.3 6.8-1.8h5.4c1.6 1.5 3.8 1.8 6.8 1.8" stroke-width="2.6"/><circle cx="12" cy="11.8" r="2.8" fill="currentColor" stroke="none"/><path d="M12 14v8" stroke-width="3"/></svg></div>
<div style="position:absolute;left:78px;top:685px;width:148px;height:30px;line-height:30px;text-align:left;white-space:nowrap;overflow:hidden;font-family:'Liberation Sans',sans-serif;color:#222;font-size:13.7px">Физобъ</div>
<div style="position:absolute;left:1177px;top:685.5px;width:140px;height:30px;line-height:30px;text-align:center;white-space:nowrap;overflow:hidden;font-family:'Liberation Sans',sans-serif;color:#222;font-size:13.5px">Физобъёмы(СДР)</div>
<div style="position:absolute;left:1317px;top:685.5px;width:100px;height:30px;line-height:30px;text-align:center;white-space:nowrap;overflow:hidden;font-family:'Liberation Sans',sans-serif;color:#222;font-size:13.5px">Материальн...</div>
<div style="position:absolute;left:1726px;top:685.5px;width:100px;height:30px;line-height:30px;text-align:center;white-space:nowrap;overflow:hidden;font-family:'Liberation Sans',sans-serif;color:#222;font-size:13.5px">Физобъёмы</div>
<div style="position:absolute;left:1830px;top:686px;width:88px;height:30px;line-height:30px;text-align:left;white-space:nowrap;overflow:hidden;font-family:'Liberation Sans',sans-serif;color:#222;font-size:13.5px">Пользовате...</div>
<div style="position:absolute;left:45px;top:714px;width:1873px;height:1px;background:#d0d0d4"></div>
<div style="color:#555"><svg style="position:absolute;left:50.0px;top:719.0px;" width="20" height="20" viewBox="0 0 24 24" fill="none" stroke="currentColor" stroke-width="1.6" stroke-linecap="round" stroke-linejoin="round"><circle cx="12" cy="12" r="10" stroke-width="1.9"/><path d="M2.5 12.3c3 0 5.2-.3 6.8-1.8h5.4c1.6 1.5 3.8 1.8 6.8 1.8" stroke-width="2.6"/><circle cx="12" cy="11.8" r="2.8" fill="currentColor" stroke="none"/><path d="M12 14v8" stroke-width="3"/></svg></div>
<div style="color:#555"><svg style="position:absolute;left:78.0px;top:719.0px;" width="20" height="20" viewBox="0 0 24 24" fill="none" stroke="currentColor" stroke-width="1.5" stroke-linecap="round" stroke-linejoin="round"><path d="M6 9.5c1-4 3.5-6.5 6.5-7 2-.3 3.5.5 4.5 2 2 1 3.5 3 3.8 5.5.9 1.5 1.4 3.5 1.2 5.5 0 3-1.5 5.5-4 7H13l-3-9z" fill="currentColor" stroke="none"/><g stroke-width="1.3"><circle cx="3.2" cy="20.3" r="2.4" fill="#fff"/><circle cx="8.2" cy="20.3" r="2.4" fill="#fff"/><circle cx="13.2" cy="20.3" r="2.4" fill="#fff"/><circle cx="5.7" cy="15.8" r="2.4" fill="#fff"/><circle cx="10.7" cy="15.8" r="2.4" fill="#fff"/><circle cx="8.2" cy="11.3" r="2.4" fill="#fff"/></g></svg></div>
<div style="position:absolute;left:106px;top:715px;width:120px;height:30px;line-height:30px;text-align:left;white-space:nowrap;overflow:hidden;font-family:'Liberation Sans',sans-serif;color:#222;font-size:13.7px">Физобъем</div>
<div style="position:absolute;left:227px;top:715.5px;width:64px;height:30px;line-height:30px;text-align:center;white-space:nowrap;overflow:hidden;font-family:'Liberation Sans',sans-serif;color:#222;font-size:13.5px">нет</div>
<div style="position:absolute;left:291px;top:715.5px;width:79px;height:30px;line-height:30px;text-align:center;white-space:nowrap;overflow:hidden;font-family:'Liberation Sans',sans-serif;color:#222;font-size:13.5px">37</div>
<div style="position:absolute;left:370px;top:715.5px;width:76px;height:30px;line-height:30px;text-align:center;white-space:nowrap;overflow:hidden;font-family:'Liberation Sans',sans-serif;color:#222;font-size:13.5px">37</div>
<div style="position:absolute;left:446px;top:715.5px;width:80px;height:30px;line-height:30px;text-align:center;white-space:nowrap;overflow:hidden;font-family:'Liberation Sans',sans-serif;color:#222;font-size:13.5px">37</div>
<div style="position:absolute;left:526px;top:715.5px;width:114px;height:30px;line-height:30px;text-align:center;white-space:nowrap;overflow:hidden;font-family:'Liberation Sans',sans-serif;color:#222;font-size:13.5px">0</div>
<div style="position:absolute;left:640px;top:715.5px;width:100px;height:30px;line-height:30px;text-align:center;white-space:nowrap;overflow:hidden;font-family:'Liberation Sans',sans-serif;color:#222;font-size:13.5px">37</div>
<div style="position:absolute;left:915px;top:715.5px;width:76px;height:30px;line-height:30px;text-align:center;white-space:nowrap;overflow:hidden;font-family:'Liberation Sans',sans-serif;color:#222;font-size:13.5px">770</div>
<div style="position:absolute;left:991px;top:715.5px;width:86px;height:30px;line-height:30px;text-align:center;white-space:nowrap;overflow:hidden;font-family:'Liberation Sans',sans-serif;color:#222;font-size:13.5px">R1</div>
<div style="position:absolute;left:1077px;top:715.5px;width:100px;height:30px;line-height:30px;text-align:center;white-space:nowrap;overflow:hidden;font-family:'Liberation Sans',sans-serif;color:#222;font-size:13.5px">R1</div>
<div style="position:absolute;left:1177px;top:715.5px;width:140px;height:30px;line-height:30px;text-align:center;white-space:nowrap;overflow:hidden;font-family:'Liberation Sans',sans-serif;color:#222;font-size:13.5px">Физобъёмы(СДР)</div>
<div style="position:absolute;left:1317px;top:715.5px;width:100px;height:30px;line-height:30px;text-align:center;white-space:nowrap;overflow:hidden;font-family:'Liberation Sans',sans-serif;color:#222;font-size:13.5px">Материальн...</div>
<div style="position:absolute;left:1417px;top:715.5px;width:100px;height:30px;line-height:30px;text-align:center;white-space:nowrap;overflow:hidden;font-family:'Liberation Sans',sans-serif;color:#222;font-size:13.5px">15</div>
<div style="position:absolute;left:1517px;top:715.5px;width:81px;height:30px;line-height:30px;text-align:center;white-space:nowrap;overflow:hidden;font-family:'Liberation Sans',sans-serif;color:#222;font-size:13.5px">0.13</div>
<div style="position:absolute;left:1652px;top:722px;width:16px;height:16px;background:#1b74d3;border-radius:2px"></div>
<svg style="position:absolute;left:1652.0px;top:722.0px;" width="16" height="16" viewBox="0 0 16 16" fill="none" stroke="#fff" stroke-width="2.2" stroke-linecap="round" stroke-linejoin="round"><path d="M3.5 8.5l3 3 6-6.5"/></svg>
<div style="position:absolute;left:1726px;top:715.5px;width:100px;height:30px;line-height:30px;text-align:center;white-space:nowrap;overflow:hidden;font-family:'Liberation Sans',sans-serif;color:#222;font-size:13.5px">Физобъёмы</div>
<div style="position:absolute;left:1830px;top:716px;width:88px;height:30px;line-height:30px;text-align:left;white-space:nowrap;overflow:hidden;font-family:'Liberation Sans',sans-serif;color:#222;font-size:13.5px">Пользовате...</div>
<div style="position:absolute;left:45px;top:744px;width:1873px;height:30px;background:#fafafa"></div>
<div style="position:absolute;left:45px;top:744px;width:1873px;height:1px;background:#d0d0d4"></div>
<div style="position:absolute;left:74px;top:746px;width:2px;height:16px;background:#111"></div>
<div style="position:absolute;left:74px;top:760px;width:20px;height:2px;background:#111"></div>
<div style="color:#555"><svg style="position:absolute;left:98.0px;top:749.0px;" width="20" height="20" viewBox="0 0 24 24" fill="none" stroke="currentColor" stroke-width="1.5" stroke-linecap="round" stroke-linejoin="round"><circle cx="15" cy="3" r="2" fill="currentColor" stroke="none"/><path d="M3 10.5C3.5 7 6 5 9.5 5.5l3 1.2c1 .5 1.2 1.5.8 2.5L12 12l3.5 3.5-1.3 1.3L10 13l-1.2-2.5-1.6 3.5 1.5 9H6.5l-1.5-7.5L3 23H.8l2.4-10.5z" fill="currentColor" stroke="none"/><path d="M12.5 14.5l5.5 5" stroke-width="1.7"/><path d="M14 23.2l4.5-7.5 5 7.5z" fill="currentColor" stroke="none"/></svg></div>
<div style="position:absolute;left:126px;top:745px;width:100px;height:30px;line-height:30px;text-align:left;white-space:nowrap;overflow:hidden;font-family:'Liberation Sans',sans-serif;color:#222;font-size:13.7px">Трудозатраты</div>
<div style="position:absolute;left:227px;top:745.5px;width:64px;height:30px;line-height:30px;text-align:center;white-space:nowrap;overflow:hidden;font-family:'Liberation Sans',sans-serif;color:#222;font-size:13.5px">ч-ч</div>
<div style="position:absolute;left:291px;top:745.5px;width:79px;height:30px;line-height:30px;text-align:center;white-space:nowrap;overflow:hidden;font-family:'Liberation Sans',sans-serif;color:#222;font-size:13.5px">4.81</div>
<div style="position:absolute;left:370px;top:745.5px;width:76px;height:30px;line-height:30px;text-align:center;white-space:nowrap;overflow:hidden;font-family:'Liberation Sans',sans-serif;color:#222;font-size:13.5px">4.81</div>
<div style="position:absolute;left:446px;top:745.5px;width:80px;height:30px;line-height:30px;text-align:center;white-space:nowrap;overflow:hidden;font-family:'Liberation Sans',sans-serif;color:#222;font-size:13.5px">4.81</div>
<div style="position:absolute;left:526px;top:745.5px;width:114px;height:30px;line-height:30px;text-align:center;white-space:nowrap;overflow:hidden;font-family:'Liberation Sans',sans-serif;color:#222;font-size:13.5px">0</div>
<div style="position:absolute;left:640px;top:745.5px;width:100px;height:30px;line-height:30px;text-align:center;white-space:nowrap;overflow:hidden;font-family:'Liberation Sans',sans-serif;color:#222;font-size:13.5px">4.81</div>
<div style="position:absolute;left:991px;top:745.5px;width:86px;height:30px;line-height:30px;text-align:center;white-space:nowrap;overflow:hidden;font-family:'Liberation Sans',sans-serif;color:#222;font-size:13.5px">R2</div>
<div style="position:absolute;left:1077px;top:745.5px;width:100px;height:30px;line-height:30px;text-align:center;white-space:nowrap;overflow:hidden;font-family:'Liberation Sans',sans-serif;color:#222;font-size:13.5px">R2</div>
<div style="position:absolute;left:1177px;top:745.5px;width:140px;height:30px;line-height:30px;text-align:center;white-space:nowrap;overflow:hidden;font-family:'Liberation Sans',sans-serif;color:#222;font-size:13.5px">Физобъёмы(СДР)</div>
<div style="position:absolute;left:1317px;top:745.5px;width:100px;height:30px;line-height:30px;text-align:center;white-space:nowrap;overflow:hidden;font-family:'Liberation Sans',sans-serif;color:#222;font-size:13.5px">Трудовой</div>
<div style="position:absolute;left:1653px;top:752px;width:16px;height:16px;border:1.5px solid #9a9aa0;border-radius:2px;box-sizing:border-box;background:#fff"></div>
<div style="position:absolute;left:1726px;top:745.5px;width:100px;height:30px;line-height:30px;text-align:center;white-space:nowrap;overflow:hidden;font-family:'Liberation Sans',sans-serif;color:#222;font-size:13.5px">Физобъёмы</div>
<div style="position:absolute;left:1830px;top:746px;width:88px;height:30px;line-height:30px;text-align:left;white-space:nowrap;overflow:hidden;font-family:'Liberation Sans',sans-serif;color:#222;font-size:13.5px">Пользовате...</div>
<div style="position:absolute;left:45px;top:774px;width:1873px;height:1px;background:#d0d0d4"></div>
<div style="position:absolute;left:74px;top:776px;width:2px;height:16px;background:#111"></div>
<div style="position:absolute;left:74px;top:790px;width:20px;height:2px;background:#111"></div>
<div style="color:#555"><svg style="position:absolute;left:98.0px;top:779.0px;" width="20" height="20" viewBox="0 0 24 24" fill="none" stroke="currentColor" stroke-width="1.5" stroke-linecap="round" stroke-linejoin="round"><g stroke-width="1.5"><path d="M7.7 2.5v5.6c0 1 1.9 1.8 4.3 1.8s4.3-.8 4.3-1.8V2.5" fill="#fff"/><ellipse cx="12" cy="2.5" rx="4.3" ry="1.8" fill="#fff"/><path d="M7.7 5.3c0 1 1.9 1.8 4.3 1.8s4.3-.8 4.3-1.8"/><path d="M1.9000000000000004 13v5.6c0 1 1.9 1.8 4.3 1.8s4.3-.8 4.3-1.8V13" fill="#fff"/><ellipse cx="6.2" cy="13" rx="4.3" ry="1.8" fill="#fff"/><path d="M1.9000000000000004 15.8c0 1 1.9 1.8 4.3 1.8s4.3-.8 4.3-1.8"/><path d="M13.5 13v5.6c0 1 1.9 1.8 4.3 1.8s4.3-.8 4.3-1.8V13" fill="#fff"/><ellipse cx="17.8" cy="13" rx="4.3" ry="1.8" fill="#fff"/><path d="M13.5 15.8c0 1 1.9 1.8 4.3 1.8s4.3-.8 4.3-1.8"/></g></svg></div>
<div style="position:absolute;left:126px;top:775px;width:100px;height:30px;line-height:30px;text-align:left;white-space:nowrap;overflow:hidden;font-family:'Liberation Sans',sans-serif;color:#222;font-size:13.7px">Стоимость</div>
<div style="position:absolute;left:227px;top:775.5px;width:64px;height:30px;line-height:30px;text-align:center;white-space:nowrap;overflow:hidden;font-family:'Liberation Sans',sans-serif;color:#222;font-size:13.5px">нет</div>
<div style="position:absolute;left:291px;top:775.5px;width:79px;height:30px;line-height:30px;text-align:center;white-space:nowrap;overflow:hidden;font-family:'Liberation Sans',sans-serif;color:#222;font-size:13.5px">28 490</div>
<div style="position:absolute;left:370px;top:775.5px;width:76px;height:30px;line-height:30px;text-align:center;white-space:nowrap;overflow:hidden;font-family:'Liberation Sans',sans-serif;color:#222;font-size:13.5px">28 490</div>
<div style="position:absolute;left:446px;top:775.5px;width:80px;height:30px;line-height:30px;text-align:center;white-space:nowrap;overflow:hidden;font-family:'Liberation Sans',sans-serif;color:#222;font-size:13.5px">0</div>
<div style="position:absolute;left:526px;top:775.5px;width:114px;height:30px;line-height:30px;text-align:center;white-space:nowrap;overflow:hidden;font-family:'Liberation Sans',sans-serif;color:#222;font-size:13.5px">0</div>
<div style="position:absolute;left:640px;top:775.5px;width:100px;height:30px;line-height:30px;text-align:center;white-space:nowrap;overflow:hidden;font-family:'Liberation Sans',sans-serif;color:#222;font-size:13.5px">0</div>
<div style="position:absolute;left:991px;top:775.5px;width:86px;height:30px;line-height:30px;text-align:center;white-space:nowrap;overflow:hidden;font-family:'Liberation Sans',sans-serif;color:#222;font-size:13.5px">R3</div>
<div style="position:absolute;left:1077px;top:775.5px;width:100px;height:30px;line-height:30px;text-align:center;white-space:nowrap;overflow:hidden;font-family:'Liberation Sans',sans-serif;color:#222;font-size:13.5px">R3</div>
<div style="position:absolute;left:1177px;top:775.5px;width:140px;height:30px;line-height:30px;text-align:center;white-space:nowrap;overflow:hidden;font-family:'Liberation Sans',sans-serif;color:#222;font-size:13.5px">Физобъёмы(СДР)</div>
<div style="position:absolute;left:1317px;top:775.5px;width:100px;height:30px;line-height:30px;text-align:center;white-space:nowrap;overflow:hidden;font-family:'Liberation Sans',sans-serif;color:#222;font-size:13.5px">Стоимость</div>
<div style="position:absolute;left:1653px;top:782px;width:16px;height:16px;border:1.5px solid #9a9aa0;border-radius:2px;box-sizing:border-box;background:#fff"></div>
<div style="position:absolute;left:1726px;top:775.5px;width:100px;height:30px;line-height:30px;text-align:center;white-space:nowrap;overflow:hidden;font-family:'Liberation Sans',sans-serif;color:#222;font-size:13.5px">Физобъёмы</div>
<div style="position:absolute;left:1830px;top:776px;width:88px;height:30px;line-height:30px;text-align:left;white-space:nowrap;overflow:hidden;font-family:'Liberation Sans',sans-serif;color:#222;font-size:13.5px">Пользовате...</div>
<div style="position:absolute;left:45px;top:804px;width:1873px;height:30px;background:#fafafa"></div>
<div style="position:absolute;left:45px;top:804px;width:1873px;height:1px;background:#d0d0d4"></div>
<div style="color:#555"><svg style="position:absolute;left:50.0px;top:809.0px;" width="20" height="20" viewBox="0 0 24 24" fill="none" stroke="currentColor" stroke-width="1.5" stroke-linecap="round" stroke-linejoin="round"><path d="M6 9.5c1-4 3.5-6.5 6.5-7 2-.3 3.5.5 4.5 2 2 1 3.5 3 3.8 5.5.9 1.5 1.4 3.5 1.2 5.5 0 3-1.5 5.5-4 7H13l-3-9z" fill="currentColor" stroke="none"/><g stroke-width="1.3"><circle cx="3.2" cy="20.3" r="2.4" fill="#fff"/><circle cx="8.2" cy="20.3" r="2.4" fill="#fff"/><circle cx="13.2" cy="20.3" r="2.4" fill="#fff"/><circle cx="5.7" cy="15.8" r="2.4" fill="#fff"/><circle cx="10.7" cy="15.8" r="2.4" fill="#fff"/><circle cx="8.2" cy="11.3" r="2.4" fill="#fff"/></g></svg></div>
<div style="position:absolute;left:78px;top:805px;width:148px;height:30px;line-height:30px;text-align:left;white-space:nowrap;overflow:hidden;font-family:'Liberation Sans',sans-serif;color:#222;font-size:13.7px">Устройство песчано...</div>
<div style="position:absolute;left:227px;top:805.5px;width:64px;height:30px;line-height:30px;text-align:center;white-space:nowrap;overflow:hidden;font-family:'Liberation Sans',sans-serif;color:#222;font-size:13.5px">м3</div>
<div style="position:absolute;left:291px;top:805.5px;width:79px;height:30px;line-height:30px;text-align:center;white-space:nowrap;overflow:hidden;font-family:'Liberation Sans',sans-serif;color:#222;font-size:13.5px">37</div>
<div style="position:absolute;left:370px;top:805.5px;width:76px;height:30px;line-height:30px;text-align:center;white-space:nowrap;overflow:hidden;font-family:'Liberation Sans',sans-serif;color:#222;font-size:13.5px">55.5</div>
<div style="position:absolute;left:446px;top:805.5px;width:80px;height:30px;line-height:30px;text-align:center;white-space:nowrap;overflow:hidden;font-family:'Liberation Sans',sans-serif;color:#222;font-size:13.5px">-18.5</div>
<div style="position:absolute;left:526px;top:805.5px;width:114px;height:30px;line-height:30px;text-align:center;white-space:nowrap;overflow:hidden;font-family:'Liberation Sans',sans-serif;color:#222;font-size:13.5px">-18.5</div>
<div style="position:absolute;left:640px;top:805.5px;width:100px;height:30px;line-height:30px;text-align:center;white-space:nowrap;overflow:hidden;font-family:'Liberation Sans',sans-serif;color:#222;font-size:13.5px">0</div>
<div style="position:absolute;left:915px;top:805.5px;width:76px;height:30px;line-height:30px;text-align:center;white-space:nowrap;overflow:hidden;font-family:'Liberation Sans',sans-serif;color:#222;font-size:13.5px">770</div>
<div style="position:absolute;left:991px;top:805.5px;width:86px;height:30px;line-height:30px;text-align:center;white-space:nowrap;overflow:hidden;font-family:'Liberation Sans',sans-serif;color:#222;font-size:13.5px">SVOD-06</div>
<div style="position:absolute;left:1077px;top:805.5px;width:100px;height:30px;line-height:30px;text-align:center;white-space:nowrap;overflow:hidden;font-family:'Liberation Sans',sans-serif;color:#222;font-size:13.5px">00003</div>
<div style="position:absolute;left:1177px;top:805.5px;width:140px;height:30px;line-height:30px;text-align:center;white-space:nowrap;overflow:hidden;font-family:'Liberation Sans',sans-serif;color:#222;font-size:13.5px">СДР. Сводная</div>
<div style="position:absolute;left:1317px;top:805.5px;width:100px;height:30px;line-height:30px;text-align:center;white-space:nowrap;overflow:hidden;font-family:'Liberation Sans',sans-serif;color:#222;font-size:13.5px">Материальн...</div>
<div style="position:absolute;left:1417px;top:805.5px;width:100px;height:30px;line-height:30px;text-align:center;white-space:nowrap;overflow:hidden;font-family:'Liberation Sans',sans-serif;color:#222;font-size:13.5px">15</div>
<div style="position:absolute;left:1517px;top:805.5px;width:81px;height:30px;line-height:30px;text-align:center;white-space:nowrap;overflow:hidden;font-family:'Liberation Sans',sans-serif;color:#222;font-size:13.5px">0.13</div>
<div style="position:absolute;left:1653px;top:812px;width:16px;height:16px;border:1.5px solid #9a9aa0;border-radius:2px;box-sizing:border-box;background:#fff"></div>
<div style="position:absolute;left:1726px;top:805.5px;width:100px;height:30px;line-height:30px;text-align:center;white-space:nowrap;overflow:hidden;font-family:'Liberation Sans',sans-serif;color:#222;font-size:13.5px">Управляющ...</div>
<div style="position:absolute;left:1830px;top:806px;width:88px;height:30px;line-height:30px;text-align:left;white-space:nowrap;overflow:hidden;font-family:'Liberation Sans',sans-serif;color:#222;font-size:13.5px">Пользовате...</div>
<div style="position:absolute;left:45px;top:834px;width:1873px;height:1px;background:#d0d0d4"></div>
<div style="position:absolute;left:74px;top:836px;width:2px;height:16px;background:#111"></div>
<div style="position:absolute;left:74px;top:850px;width:20px;height:2px;background:#111"></div>
<div style="color:#555"><svg style="position:absolute;left:98.0px;top:839.0px;" width="20" height="20" viewBox="0 0 24 24" fill="none" stroke="currentColor" stroke-width="1.5" stroke-linecap="round" stroke-linejoin="round"><path d="M6 9.5c1-4 3.5-6.5 6.5-7 2-.3 3.5.5 4.5 2 2 1 3.5 3 3.8 5.5.9 1.5 1.4 3.5 1.2 5.5 0 3-1.5 5.5-4 7H13l-3-9z" fill="currentColor" stroke="none"/><g stroke-width="1.3"><circle cx="3.2" cy="20.3" r="2.4" fill="#fff"/><circle cx="8.2" cy="20.3" r="2.4" fill="#fff"/><circle cx="13.2" cy="20.3" r="2.4" fill="#fff"/><circle cx="5.7" cy="15.8" r="2.4" fill="#fff"/><circle cx="10.7" cy="15.8" r="2.4" fill="#fff"/><circle cx="8.2" cy="11.3" r="2.4" fill="#fff"/></g></svg></div>
<div style="position:absolute;left:126px;top:835px;width:100px;height:30px;line-height:30px;text-align:left;white-space:nowrap;overflow:hidden;font-family:'Liberation Sans',sans-serif;color:#222;font-size:13.7px">Песок</div>
<div style="position:absolute;left:227px;top:835.5px;width:64px;height:30px;line-height:30px;text-align:center;white-space:nowrap;overflow:hidden;font-family:'Liberation Sans',sans-serif;color:#222;font-size:13.5px">м3</div>
<div style="position:absolute;left:291px;top:835.5px;width:79px;height:30px;line-height:30px;text-align:center;white-space:nowrap;overflow:hidden;font-family:'Liberation Sans',sans-serif;color:#222;font-size:13.5px">37</div>
<div style="position:absolute;left:370px;top:835.5px;width:76px;height:30px;line-height:30px;text-align:center;white-space:nowrap;overflow:hidden;font-family:'Liberation Sans',sans-serif;color:#222;font-size:13.5px">55.5</div>
<div style="position:absolute;left:446px;top:835.5px;width:80px;height:30px;line-height:30px;text-align:center;white-space:nowrap;overflow:hidden;font-family:'Liberation Sans',sans-serif;color:#222;font-size:13.5px">-18.5</div>
<div style="position:absolute;left:526px;top:835.5px;width:114px;height:30px;line-height:30px;text-align:center;white-space:nowrap;overflow:hidden;font-family:'Liberation Sans',sans-serif;color:#222;font-size:13.5px">-18.5</div>
<div style="position:absolute;left:640px;top:835.5px;width:100px;height:30px;line-height:30px;text-align:center;white-space:nowrap;overflow:hidden;font-family:'Liberation Sans',sans-serif;color:#222;font-size:13.5px">0</div>
<div style="position:absolute;left:850px;top:835.5px;width:65px;height:30px;line-height:30px;text-align:center;white-space:nowrap;overflow:hidden;font-family:'Liberation Sans',sans-serif;color:#222;font-size:13.5px">1</div>
<div style="position:absolute;left:915px;top:835.5px;width:76px;height:30px;line-height:30px;text-align:center;white-space:nowrap;overflow:hidden;font-family:'Liberation Sans',sans-serif;color:#222;font-size:13.5px">770</div>
<div style="position:absolute;left:991px;top:835.5px;width:86px;height:30px;line-height:30px;text-align:center;white-space:nowrap;overflow:hidden;font-family:'Liberation Sans',sans-serif;color:#222;font-size:13.5px">SVOD-07</div>
<div style="position:absolute;left:1077px;top:835.5px;width:100px;height:30px;line-height:30px;text-align:center;white-space:nowrap;overflow:hidden;font-family:'Liberation Sans',sans-serif;color:#222;font-size:13.5px">MR-001-02</div>
<div style="position:absolute;left:1177px;top:835.5px;width:140px;height:30px;line-height:30px;text-align:center;white-space:nowrap;overflow:hidden;font-family:'Liberation Sans',sans-serif;color:#222;font-size:13.5px">СДР. Сводная</div>
<div style="position:absolute;left:1317px;top:835.5px;width:100px;height:30px;line-height:30px;text-align:center;white-space:nowrap;overflow:hidden;font-family:'Liberation Sans',sans-serif;color:#222;font-size:13.5px">Материальн...</div>
<div style="position:absolute;left:1417px;top:835.5px;width:100px;height:30px;line-height:30px;text-align:center;white-space:nowrap;overflow:hidden;font-family:'Liberation Sans',sans-serif;color:#222;font-size:13.5px">0</div>
<div style="position:absolute;left:1517px;top:835.5px;width:81px;height:30px;line-height:30px;text-align:center;white-space:nowrap;overflow:hidden;font-family:'Liberation Sans',sans-serif;color:#222;font-size:13.5px">0</div>
<div style="position:absolute;left:1653px;top:842px;width:16px;height:16px;border:1.5px solid #9a9aa0;border-radius:2px;box-sizing:border-box;background:#fff"></div>
<div style="position:absolute;left:1726px;top:835.5px;width:100px;height:30px;line-height:30px;text-align:center;white-space:nowrap;overflow:hidden;font-family:'Liberation Sans',sans-serif;color:#222;font-size:13.5px">Материальн...</div>
<div style="position:absolute;left:1830px;top:836px;width:88px;height:30px;line-height:30px;text-align:left;white-space:nowrap;overflow:hidden;font-family:'Liberation Sans',sans-serif;color:#222;font-size:13.5px">Пользовате...</div>
<div style="position:absolute;left:45px;top:864px;width:1873px;height:30px;background:#fafafa"></div>
<div style="position:absolute;left:45px;top:864px;width:1873px;height:1px;background:#d0d0d4"></div>
<div style="position:absolute;left:74px;top:866px;width:2px;height:16px;background:#111"></div>
<div style="position:absolute;left:74px;top:880px;width:20px;height:2px;background:#111"></div>
<div style="color:#555"><svg style="position:absolute;left:98.0px;top:869.0px;" width="20" height="20" viewBox="0 0 24 24" fill="none" stroke="currentColor" stroke-width="1.5" stroke-linecap="round" stroke-linejoin="round"><path d="M1 4.5h13.5v2H1z" fill="currentColor" stroke="none"/><path d="M1.5 8h12.5v10H1.5z" stroke-width="1.6"/><path d="M4.5 9.5v7M7.7 9.5v7M10.9 9.5v7" stroke-width="1.6"/><path d="M15 8.5h4.5l3.5 4.5v6H15z" fill="currentColor" stroke="none"/><path d="M1 18h22" stroke-width="1.6"/><circle cx="5" cy="20.5" r="2.3" fill="#fff" stroke-width="1.6"/><circle cx="18.5" cy="20.5" r="2.3" fill="#fff" stroke-width="1.6"/></svg></div>
<div style="position:absolute;left:126px;top:865px;width:100px;height:30px;line-height:30px;text-align:left;white-space:nowrap;overflow:hidden;font-family:'Liberation Sans',sans-serif;color:#222;font-size:13.7px">КАМАЗ</div>
<div style="position:absolute;left:227px;top:865.5px;width:64px;height:30px;line-height:30px;text-align:center;white-space:nowrap;overflow:hidden;font-family:'Liberation Sans',sans-serif;color:#222;font-size:13.5px">м-ч</div>
<div style="position:absolute;left:291px;top:865.5px;width:79px;height:30px;line-height:30px;text-align:center;white-space:nowrap;overflow:hidden;font-family:'Liberation Sans',sans-serif;color:#222;font-size:13.5px">1 200</div>
<div style="position:absolute;left:370px;top:865.5px;width:76px;height:30px;line-height:30px;text-align:center;white-space:nowrap;overflow:hidden;font-family:'Liberation Sans',sans-serif;color:#222;font-size:13.5px">1 800</div>
<div style="position:absolute;left:446px;top:865.5px;width:80px;height:30px;line-height:30px;text-align:center;white-space:nowrap;overflow:hidden;font-family:'Liberation Sans',sans-serif;color:#222;font-size:13.5px">-600</div>
<div style="position:absolute;left:526px;top:865.5px;width:114px;height:30px;line-height:30px;text-align:center;white-space:nowrap;overflow:hidden;font-family:'Liberation Sans',sans-serif;color:#222;font-size:13.5px">-600</div>
<div style="position:absolute;left:640px;top:865.5px;width:100px;height:30px;line-height:30px;text-align:center;white-space:nowrap;overflow:hidden;font-family:'Liberation Sans',sans-serif;color:#222;font-size:13.5px">0</div>
<div style="position:absolute;left:850px;top:865.5px;width:65px;height:30px;line-height:30px;text-align:center;white-space:nowrap;overflow:hidden;font-family:'Liberation Sans',sans-serif;color:#222;font-size:13.5px">32.432</div>
<div style="position:absolute;left:915px;top:865.5px;width:76px;height:30px;line-height:30px;text-align:center;white-space:nowrap;overflow:hidden;font-family:'Liberation Sans',sans-serif;color:#222;font-size:13.5px">4 500</div>
<div style="position:absolute;left:991px;top:865.5px;width:86px;height:30px;line-height:30px;text-align:center;white-space:nowrap;overflow:hidden;font-family:'Liberation Sans',sans-serif;color:#222;font-size:13.5px">SVOD-08</div>
<div style="position:absolute;left:1077px;top:865.5px;width:100px;height:30px;line-height:30px;text-align:center;white-space:nowrap;overflow:hidden;font-family:'Liberation Sans',sans-serif;color:#222;font-size:13.5px">MhRes-001-01</div>
<div style="position:absolute;left:1177px;top:865.5px;width:140px;height:30px;line-height:30px;text-align:center;white-space:nowrap;overflow:hidden;font-family:'Liberation Sans',sans-serif;color:#222;font-size:13.5px">СДР. Сводная</div>
<div style="position:absolute;left:1317px;top:865.5px;width:100px;height:30px;line-height:30px;text-align:center;white-space:nowrap;overflow:hidden;font-family:'Liberation Sans',sans-serif;color:#222;font-size:13.5px">Нетрудовой ...</div>
<div style="position:absolute;left:1417px;top:865.5px;width:100px;height:30px;line-height:30px;text-align:center;white-space:nowrap;overflow:hidden;font-family:'Liberation Sans',sans-serif;color:#222;font-size:13.5px">1</div>
<div style="position:absolute;left:1517px;top:865.5px;width:81px;height:30px;line-height:30px;text-align:center;white-space:nowrap;overflow:hidden;font-family:'Liberation Sans',sans-serif;color:#222;font-size:13.5px">0</div>
<div style="position:absolute;left:1653px;top:872px;width:16px;height:16px;border:1.5px solid #9a9aa0;border-radius:2px;box-sizing:border-box;background:#fff"></div>
<div style="position:absolute;left:1726px;top:865.5px;width:100px;height:30px;line-height:30px;text-align:center;white-space:nowrap;overflow:hidden;font-family:'Liberation Sans',sans-serif;color:#222;font-size:13.5px">Машины и м...</div>
<div style="position:absolute;left:1830px;top:866px;width:88px;height:30px;line-height:30px;text-align:left;white-space:nowrap;overflow:hidden;font-family:'Liberation Sans',sans-serif;color:#222;font-size:13.5px">Пользовате...</div>
<div style="position:absolute;left:45px;top:624px;width:1873px;height:1px;background:#c6c6cc"></div>
<div style="position:absolute;left:45px;top:894px;width:1873px;height:1px;background:#d0d0d4"></div>
<div style="position:absolute;left:45px;top:601px;width:1px;height:293px;background:#cfcfd4"></div>
<div style="position:absolute;left:226px;top:601px;width:1px;height:293px;background:#cfcfd4"></div>
<div style="position:absolute;left:290px;top:601px;width:1px;height:293px;background:#cfcfd4"></div>
<div style="position:absolute;left:369px;top:601px;width:1px;height:293px;background:#cfcfd4"></div>
<div style="position:absolute;left:445px;top:601px;width:1px;height:293px;background:#cfcfd4"></div>
<div style="position:absolute;left:525px;top:601px;width:1px;height:293px;background:#cfcfd4"></div>
<div style="position:absolute;left:639px;top:601px;width:1px;height:293px;background:#cfcfd4"></div>
<div style="position:absolute;left:739px;top:601px;width:1px;height:293px;background:#cfcfd4"></div>
<div style="position:absolute;left:849px;top:601px;width:1px;height:293px;background:#cfcfd4"></div>
<div style="position:absolute;left:914px;top:601px;width:1px;height:293px;background:#cfcfd4"></div>
<div style="position:absolute;left:990px;top:601px;width:1px;height:293px;background:#cfcfd4"></div>
<div style="position:absolute;left:1076px;top:601px;width:1px;height:293px;background:#cfcfd4"></div>
<div style="position:absolute;left:1176px;top:601px;width:1px;height:293px;background:#cfcfd4"></div>
<div style="position:absolute;left:1316px;top:601px;width:1px;height:293px;background:#cfcfd4"></div>
<div style="position:absolute;left:1416px;top:601px;width:1px;height:293px;background:#cfcfd4"></div>
<div style="position:absolute;left:1516px;top:601px;width:1px;height:293px;background:#cfcfd4"></div>
<div style="position:absolute;left:1597px;top:601px;width:1px;height:293px;background:#cfcfd4"></div>
<div style="position:absolute;left:1725px;top:601px;width:1px;height:293px;background:#cfcfd4"></div>
<div style="position:absolute;left:1825px;top:601px;width:1px;height:293px;background:#cfcfd4"></div>
<div style="position:absolute;left:45px;top:895px;width:1873px;height:16px;background:#f0f0f3"></div>
<div style="position:absolute;left:226px;top:900px;width:1683px;height:11px;background:#dadade;border-radius:4px 4px 0 0"></div>
<svg style="position:absolute;left:0;top:0" width="1918" height="911"><rect x="135.2" y="630" width="3" height="58" fill="#000"/><path d="M130.9 632.5L136.7 620.5L142.5 632.5z" fill="#000"/><ellipse cx="137.7" cy="706" rx="15.9" ry="17.6" fill="#fff" stroke="#000" stroke-width="2.9"/><text x="137.7" y="713.5" text-anchor="middle" font-family="Liberation Sans" font-size="20.5" fill="#000">1</text><rect x="254.5" y="630" width="3" height="58" fill="#000"/><path d="M250.2 632.5L256.0 620.5L261.8 632.5z" fill="#000"/><ellipse cx="257.0" cy="706" rx="15.9" ry="17.6" fill="#fff" stroke="#000" stroke-width="2.9"/><text x="257.0" y="713.5" text-anchor="middle" font-family="Liberation Sans" font-size="20.5" fill="#000">2</text><rect x="331.1" y="630" width="3" height="58" fill="#000"/><path d="M326.8 632.5L332.6 620.5L338.4 632.5z" fill="#000"/><ellipse cx="333.6" cy="706" rx="15.9" ry="17.6" fill="#fff" stroke="#000" stroke-width="2.9"/><text x="333.6" y="713.5" text-anchor="middle" font-family="Liberation Sans" font-size="20.5" fill="#000">3</text><rect x="407.1" y="630" width="3" height="58" fill="#000"/><path d="M402.8 632.5L408.6 620.5L414.4 632.5z" fill="#000"/><ellipse cx="409.6" cy="706" rx="15.9" ry="17.6" fill="#fff" stroke="#000" stroke-width="2.9"/><text x="409.6" y="713.5" text-anchor="middle" font-family="Liberation Sans" font-size="20.5" fill="#000">4</text><rect x="487.2" y="630" width="3" height="58" fill="#000"/><path d="M482.9 632.5L488.7 620.5L494.5 632.5z" fill="#000"/><ellipse cx="489.7" cy="706" rx="15.9" ry="17.6" fill="#fff" stroke="#000" stroke-width="2.9"/><text x="489.7" y="713.5" text-anchor="middle" font-family="Liberation Sans" font-size="20.5" fill="#000">5</text><rect x="583.0" y="630" width="3" height="58" fill="#000"/><path d="M578.7 632.5L584.5 620.5L590.3 632.5z" fill="#000"/><ellipse cx="585.5" cy="706" rx="15.9" ry="17.6" fill="#fff" stroke="#000" stroke-width="2.9"/><text x="585.5" y="713.5" text-anchor="middle" font-family="Liberation Sans" font-size="20.5" fill="#000">6</text><rect x="691.8" y="630" width="3" height="58" fill="#000"/><path d="M687.5 632.5L693.3 620.5L699.1 632.5z" fill="#000"/><ellipse cx="694.3" cy="706" rx="15.9" ry="17.6" fill="#fff" stroke="#000" stroke-width="2.9"/><text x="694.3" y="713.5" text-anchor="middle" font-family="Liberation Sans" font-size="20.5" fill="#000">7</text><rect x="792.5" y="630" width="3" height="58" fill="#000"/><path d="M788.2 632.5L794.0 620.5L799.8 632.5z" fill="#000"/><ellipse cx="795.0" cy="706" rx="15.9" ry="17.6" fill="#fff" stroke="#000" stroke-width="2.9"/><text x="795.0" y="713.5" text-anchor="middle" font-family="Liberation Sans" font-size="20.5" fill="#000">8</text><rect x="881.0" y="630" width="3" height="58" fill="#000"/><path d="M876.7 632.5L882.5 620.5L888.3 632.5z" fill="#000"/><ellipse cx="883.5" cy="706" rx="15.9" ry="17.6" fill="#fff" stroke="#000" stroke-width="2.9"/><text x="883.5" y="713.5" text-anchor="middle" font-family="Liberation Sans" font-size="20.5" fill="#000">9</text><rect x="953.7" y="630" width="3" height="58" fill="#000"/><path d="M949.4 632.5L955.2 620.5L961.0 632.5z" fill="#000"/><ellipse cx="956.2" cy="706" rx="15.9" ry="17.6" fill="#fff" stroke="#000" stroke-width="2.9"/><text x="956.2" y="713.5" text-anchor="middle" font-family="Liberation Sans" font-size="20.5" letter-spacing="-1.2" fill="#000">10</text><rect x="1033.5" y="630" width="3" height="58" fill="#000"/><path d="M1029.2 632.5L1035.0 620.5L1040.8 632.5z" fill="#000"/><ellipse cx="1036.0" cy="706" rx="15.9" ry="17.6" fill="#fff" stroke="#000" stroke-width="2.9"/><text x="1036.0" y="713.5" text-anchor="middle" font-family="Liberation Sans" font-size="20.5" letter-spacing="-1.2" fill="#000">11</text><rect x="1128.9" y="630" width="3" height="58" fill="#000"/><path d="M1124.6 632.5L1130.4 620.5L1136.2 632.5z" fill="#000"/><ellipse cx="1131.4" cy="706" rx="15.9" ry="17.6" fill="#fff" stroke="#000" stroke-width="2.9"/><text x="1131.4" y="713.5" text-anchor="middle" font-family="Liberation Sans" font-size="20.5" letter-spacing="-1.2" fill="#000">12</text><rect x="1248.0" y="630" width="3" height="58" fill="#000"/><path d="M1243.7 632.5L1249.5 620.5L1255.3 632.5z" fill="#000"/><ellipse cx="1250.5" cy="706" rx="15.9" ry="17.6" fill="#fff" stroke="#000" stroke-width="2.9"/><text x="1250.5" y="713.5" text-anchor="middle" font-family="Liberation Sans" font-size="20.5" letter-spacing="-1.2" fill="#000">13</text><rect x="1370.0" y="630" width="3" height="58" fill="#000"/><path d="M1365.7 632.5L1371.5 620.5L1377.3 632.5z" fill="#000"/><ellipse cx="1372.5" cy="706" rx="15.9" ry="17.6" fill="#fff" stroke="#000" stroke-width="2.9"/><text x="1372.5" y="713.5" text-anchor="middle" font-family="Liberation Sans" font-size="20.5" letter-spacing="-1.2" fill="#000">14</text><rect x="1467.4" y="630" width="3" height="58" fill="#000"/><path d="M1463.1 632.5L1468.9 620.5L1474.7 632.5z" fill="#000"/><ellipse cx="1469.9" cy="706" rx="15.9" ry="17.6" fill="#fff" stroke="#000" stroke-width="2.9"/><text x="1469.9" y="713.5" text-anchor="middle" font-family="Liberation Sans" font-size="20.5" letter-spacing="-1.2" fill="#000">15</text><rect x="1555.8" y="630" width="3" height="58" fill="#000"/><path d="M1551.5 632.5L1557.3 620.5L1563.1 632.5z" fill="#000"/><ellipse cx="1558.3" cy="706" rx="15.9" ry="17.6" fill="#fff" stroke="#000" stroke-width="2.9"/><text x="1558.3" y="713.5" text-anchor="middle" font-family="Liberation Sans" font-size="20.5" letter-spacing="-1.2" fill="#000">16</text><rect x="1661.9" y="630" width="3" height="58" fill="#000"/><path d="M1657.6 632.5L1663.4 620.5L1669.2 632.5z" fill="#000"/><ellipse cx="1664.4" cy="706" rx="15.9" ry="17.6" fill="#fff" stroke="#000" stroke-width="2.9"/><text x="1664.4" y="713.5" text-anchor="middle" font-family="Liberation Sans" font-size="20.5" letter-spacing="-1.2" fill="#000">17</text><rect x="1780.3" y="630" width="3" height="58" fill="#000"/><path d="M1776.0 632.5L1781.8 620.5L1787.6 632.5z" fill="#000"/><ellipse cx="1782.8" cy="706" rx="15.9" ry="17.6" fill="#fff" stroke="#000" stroke-width="2.9"/><text x="1782.8" y="713.5" text-anchor="middle" font-family="Liberation Sans" font-size="20.5" letter-spacing="-1.2" fill="#000">18</text><rect x="1878.8" y="630" width="3" height="58" fill="#000"/><path d="M1874.5 632.5L1880.3 620.5L1886.1 632.5z" fill="#000"/><ellipse cx="1881.3" cy="706" rx="15.9" ry="17.6" fill="#fff" stroke="#000" stroke-width="2.9"/><text x="1881.3" y="713.5" text-anchor="middle" font-family="Liberation Sans" font-size="20.5" letter-spacing="-1.2" fill="#000">19</text></svg></div></body></html>
